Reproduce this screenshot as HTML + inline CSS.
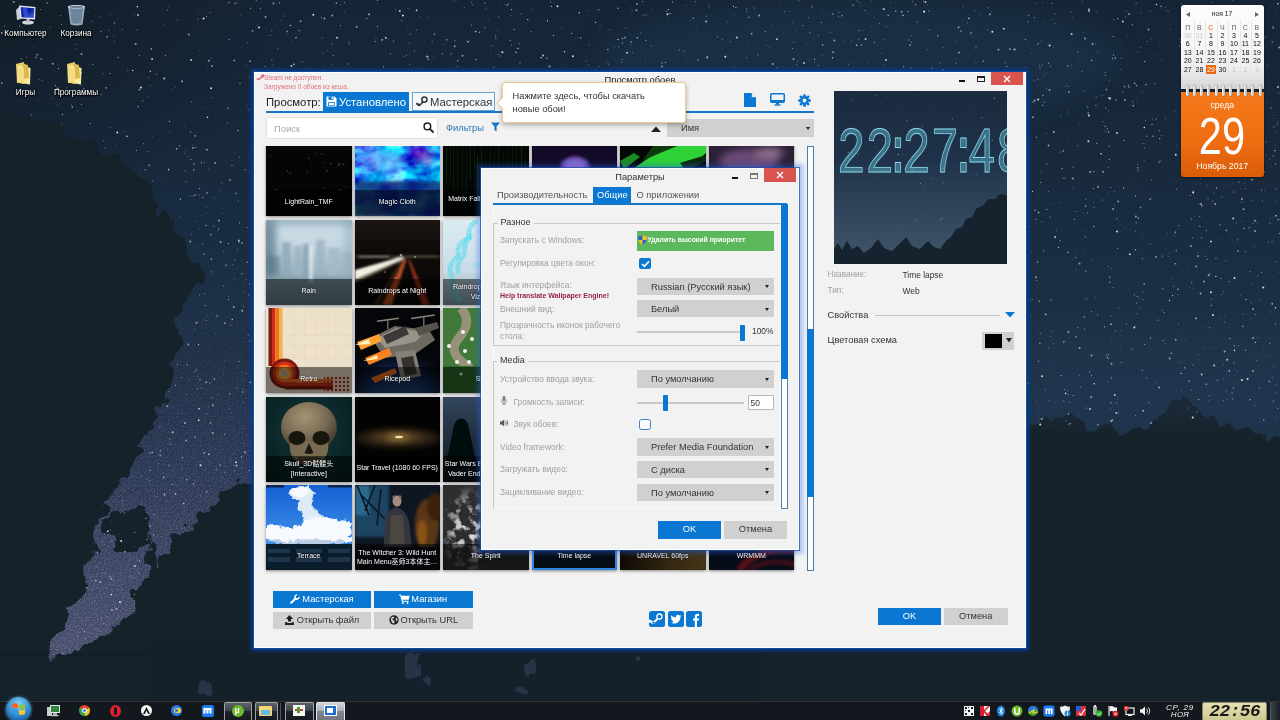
<!DOCTYPE html>
<html lang="ru">
<head>
<meta charset="utf-8">
<title>Просмотр обоев</title>
<style>
*{box-sizing:border-box;margin:0;padding:0}
html,body{width:1280px;height:720px;overflow:hidden;background:#15222d}
body{position:relative;will-change:transform;font-family:"Liberation Sans","Noto Sans CJK SC",sans-serif;font-size:9.3px;color:#333}
.abs{position:absolute}
#bg{position:absolute;left:0;top:0;width:1280px;height:720px}
/* desktop icons */
.dlabel{position:absolute;color:#fff;font-size:8.2px;line-height:11px;text-align:center;white-space:nowrap;text-shadow:0 1px 2px #000,0 0 2px #000,1px 1px 1px #000}
/* main window */
#win{position:absolute;left:254px;top:72px;width:772px;height:576px;background:#f2f2f2;border:1px solid #fbffff;box-shadow:0 0 0 1px #0d4aa0,0 0 4px 3px #0a3c86}
#win *{position:absolute}
.t{white-space:nowrap;line-height:1}
.btn{display:block;text-align:center;white-space:nowrap}
.blue{background:#0a78d2;color:#fff}
.grey{background:#d0d0d0;color:#333}
.thumb{width:85.5px;height:85px;overflow:hidden;background:#000;box-shadow:0 1px 3px rgba(0,0,0,.45)}
.thumb .ov{left:0;right:0;bottom:0;height:26px;background:rgba(0,0,0,.5)}
.thumb .lb{left:-10px;right:-10px;bottom:0;height:27px;line-height:26px;color:#fff;font-size:7px;text-align:center;white-space:nowrap;text-shadow:0 0 1.5px #000}
.thumb .lb2{line-height:9.5px;padding-top:4.5px}
/* dialog */
#dlg{position:absolute;left:481px;top:168px;width:318px;height:382px;background:#f2f2f2;border:1px solid #fbffff;box-shadow:0 0 0 1px rgba(25,75,165,.7),0 0 4px 4px rgba(35,100,235,.33)}
#dlg *{position:absolute}
.lab{color:#a0a0a0;font-size:8.4px;white-space:nowrap;line-height:12px}
.dd{background:#d0d0d0;color:#333;font-size:9.3px;line-height:18.500px;white-space:nowrap}
.dd:after{content:"";position:absolute;right:4.500px;top:7.500px;border:2.700px solid transparent;border-top:3.200px solid #222;border-bottom:0}
/* taskbar */
#tb{position:absolute;left:0;top:701px;width:1280px;height:19px;background:#12181d;border-top:1px solid #2a3238}
#tb *{position:absolute}
</style>
</head>
<body>
<svg id="bg" viewBox="0 0 1280 720">
<defs>
<linearGradient id="sky" x1="0" y1="0" x2="0" y2="1"><stop offset="0" stop-color="#162536"/><stop offset=".3" stop-color="#192b40"/><stop offset=".58" stop-color="#1e334a"/><stop offset="1" stop-color="#223a54"/></linearGradient>
<radialGradient id="glow1" cx=".5" cy=".5" r=".5"><stop offset="0" stop-color="#586582" stop-opacity=".9"/><stop offset="1" stop-color="#2a3e5c" stop-opacity="0"/></radialGradient>
<filter id="b6" x="-30%" y="-30%" width="160%" height="160%"><feGaussianBlur stdDeviation="6"/></filter>
<filter id="b2" x="-10%" y="-10%" width="120%" height="120%"><feGaussianBlur stdDeviation="2"/></filter>
<filter id="rough" x="-10%" y="-10%" width="120%" height="120%"><feTurbulence type="fractalNoise" baseFrequency=".045" numOctaves="3" seed="5" result="n"/><feDisplacementMap in="SourceGraphic" in2="n" scale="34" xChannelSelector="R" yChannelSelector="G"/><feGaussianBlur stdDeviation=".7"/></filter><filter id="rough2" x="-10%" y="-10%" width="120%" height="120%"><feTurbulence type="fractalNoise" baseFrequency=".06 .04" numOctaves="3" seed="9" result="n"/><feDisplacementMap in="SourceGraphic" in2="n" scale="22" xChannelSelector="R" yChannelSelector="G"/><feGaussianBlur stdDeviation=".7"/></filter><filter id="b12" x="-50%" y="-50%" width="200%" height="200%"><feGaussianBlur stdDeviation="14"/></filter>
</defs>
<rect width="1280" height="720" fill="url(#sky)"/>
<radialGradient id="tl" cx="0" cy="0" r="1" gradientUnits="userSpaceOnUse" gradientTransform="scale(300 210)"><stop offset="0" stop-color="#111c26" stop-opacity=".9"/><stop offset=".5" stop-color="#121e29" stop-opacity=".55"/><stop offset="1" stop-color="#121e29" stop-opacity="0"/></radialGradient>
<rect width="320" height="230" fill="url(#tl)"/>
<ellipse cx="860" cy="60" rx="260" ry="60" fill="#1f3a56" opacity=".4" filter="url(#b12)"/>
<linearGradient id="band" x1="0" y1="230" x2="0" y2="660" gradientUnits="userSpaceOnUse"><stop offset="0" stop-color="#1b2d43" stop-opacity="0"/><stop offset=".3" stop-color="#1f3048"/><stop offset=".55" stop-color="#2b3853"/><stop offset=".8" stop-color="#3d4662"/><stop offset="1" stop-color="#4a4f6c"/></linearGradient>
<polygon points="262,225 150,225 100,420 30,670 120,670 262,500" fill="url(#band)"/>
<filter id="grain" x="0" y="0" width="100%" height="100%" color-interpolation-filters="sRGB"><feTurbulence type="fractalNoise" baseFrequency=".75" numOctaves="2" seed="2"/><feColorMatrix type="matrix" values="0 0 0 0 .62  0 0 0 0 .66  0 0 0 0 .8  2.400 0 0 0 -1.150"/></filter>
<linearGradient id="gm" x1="0" y1="230" x2="0" y2="660" gradientUnits="userSpaceOnUse"><stop offset="0" stop-color="#fff" stop-opacity="0"/><stop offset=".35" stop-color="#fff" stop-opacity=".2"/><stop offset=".7" stop-color="#fff" stop-opacity=".5"/><stop offset="1" stop-color="#fff" stop-opacity=".6"/></linearGradient><mask id="gmm"><polygon points="262,225 150,225 100,420 30,670 120,670 262,500" fill="url(#gm)"/></mask>
<rect x="20" y="225" width="245" height="450" filter="url(#grain)" mask="url(#gmm)"/>
<polygon points="-10,104 30,118 57,130 81,141 110,155 134,171 152,196 171,228 188,248 203,262 192,285 185,305 178,340 170,372 162,400 150,430 128,470 104,520 84,575 66,625 44,662 -10,700" fill="#14212b" filter="url(#rough)"/>
<polygon points="262,474 240,484 222,495 196,515 170,545 150,578 125,612 100,636 72,652 44,662 20,680 20,730 262,730" fill="#14212b" filter="url(#rough)"/>
<ellipse cx="128" cy="528" rx="22" ry="20" fill="#14212b" filter="url(#rough)"/>
<ellipse cx="150" cy="560" rx="6" ry="22" fill="#14212b" filter="url(#rough)"/>
<rect x="-20" y="662" width="1320" height="80" fill="#14202a" filter="url(#b6)"/>
<rect x="150" y="640" width="1150" height="90" fill="#14212b"/>
<ellipse cx="413" cy="665" rx="6" ry="14" fill="#343f58" opacity=".6" filter="url(#rough2)"/>
<ellipse cx="425" cy="680" rx="5" ry="6" fill="#343f58" opacity=".6" filter="url(#rough2)"/>
<ellipse cx="530" cy="668" rx="5" ry="7" fill="#343f58" opacity=".6" filter="url(#rough2)"/>
<ellipse cx="520" cy="690" rx="6" ry="4" fill="#343f58" opacity=".6" filter="url(#rough2)"/>
<ellipse cx="205" cy="690" rx="6" ry="8" fill="#343f58" opacity=".6" filter="url(#rough2)"/>
<ellipse cx="640" cy="660" rx="4" ry="3" fill="#343f58" opacity=".6" filter="url(#rough2)"/>
<polygon points="1010,428 1040,424 1065,418 1090,426 1120,432 1145,430 1165,412 1185,396 1200,410 1222,424 1250,432 1290,448 1290,730 760,730 760,440" fill="#15222c" filter="url(#rough2)"/>
<rect x="1020" y="330" width="270" height="95" fill="#25405a" opacity=".25" filter="url(#b12)"/>
<g fill="none" stroke="#dde6f2" stroke-linecap="round"><path stroke-width="0.70" opacity="0.3" d="M1209.2 341.4h0M54.0 70.4h0M163.8 181.3h0M186.7 204.0h0M1026.9 363.1h0M784.0 32.8h0M39.5 99.6h0M231.1 259.5h0M19.9 3.4h0M1169.3 37.9h0M1185.2 277.3h0M1064.2 172.4h0M517.6 34.0h0M1266.6 164.3h0M1156.5 77.6h0M849.2 62.5h0M144.6 116.2h0M306.7 68.4h0M253.7 158.1h0M1159.4 275.5h0M1224.1 185.4h0M1263.6 13.9h0M185.4 502.2h0M625.2 1.2h0M205.1 496.8h0M569.4 18.4h0M1237.0 291.7h0M1114.6 15.9h0M364.7 28.5h0M1249.7 32.6h0M272.0 1.5h0M196.3 396.5h0M1273.9 366.2h0M272.6 42.1h0M1187.6 267.2h0M1243.9 125.6h0M194.6 500.2h0M230.2 149.3h0M1152.3 294.7h0M1264.5 286.7h0M1265.8 154.9h0M930.1 47.0h0M599.4 30.2h0M725.8 55.3h0M1207.0 326.5h0M34.1 67.6h0M1235.0 375.0h0M1098.0 7.4h0M1211.0 268.9h0M1227.3 148.8h0M1216.9 392.1h0M1049.7 58.6h0M1156.2 203.0h0M777.8 56.8h0M1274.5 127.0h0M569.2 71.1h0M1199.9 372.1h0M1226.6 143.4h0M1165.4 11.0h0M249.7 351.3h0M573.4 3.3h0M812.3 28.8h0M146.2 562.4h0M1255.5 292.5h0M1052.5 229.2h0M1191.2 345.4h0M1130.0 105.6h0M914.5 11.1h0M702.9 12.8h0M1168.3 176.7h0M179.6 488.3h0M467.2 36.9h0M245.7 205.5h0M1211.9 164.5h0M1222.4 265.9h0M100.6 71.1h0M119.0 534.0h0M221.1 397.9h0M1120.1 0.8h0M973.5 36.5h0M956.5 59.8h0M1199.3 328.2h0M1212.8 399.3h0M1186.7 271.7h0M1193.3 263.9h0M1129.3 156.0h0M95.2 612.5h0M275.5 26.7h0M1253.5 359.5h0"/><path stroke-width="0.70" opacity="0.45" d="M89.4 65.3h0M1060.9 116.2h0M175.5 87.6h0M1244.5 178.9h0M108.8 559.3h0M1264.4 190.7h0M1037.5 288.2h0M33.1 47.8h0M1060.4 114.2h0M1273.5 118.5h0M810.4 10.8h0M210.7 431.7h0M112.3 580.7h0M1264.0 212.8h0M1083.8 253.5h0M1120.1 421.3h0M201.6 215.7h0M1107.5 381.9h0M245.3 342.1h0M1068.7 112.8h0M223.4 372.5h0M1046.4 73.2h0M264.8 72.6h0M582.5 73.5h0M844.4 40.6h0M81.9 85.2h0M215.6 333.6h0M202.5 107.5h0M130.7 141.9h0M1219.6 136.1h0M1049.5 217.4h0M1110.7 408.5h0M90.0 625.0h0M1220.7 318.3h0M1193.0 145.3h0M1060.2 240.8h0M1220.8 96.3h0M1274.2 115.4h0M575.1 38.1h0M631.7 44.9h0M962.8 5.1h0M1079.7 123.2h0M179.4 216.5h0M1270.4 218.7h0M1053.4 366.2h0M1124.3 228.4h0M607.3 71.3h0M1111.7 340.9h0M600.3 25.9h0M141.5 504.0h0M1114.7 205.2h0M1238.8 7.7h0M1254.8 247.0h0M1270.6 6.0h0M27.2 98.6h0M1067.5 138.3h0M806.9 43.7h0M147.1 512.7h0M912.1 2.7h0M286.8 34.6h0M1067.5 110.9h0M1273.3 366.0h0M201.9 328.0h0M1267.2 102.8h0M1176.6 145.8h0M769.3 47.4h0M1221.2 22.5h0M1240.5 295.5h0M377.1 3.0h0M734.0 15.3h0M94.9 82.4h0M466.4 40.7h0M218.8 132.2h0M1221.0 238.4h0M1273.4 216.9h0M1181.1 68.2h0M1174.2 236.2h0M667.1 19.0h0M980.6 15.1h0M1083.8 32.3h0M560.4 64.1h0M1055.9 401.8h0M883.4 64.7h0M1185.0 153.4h0M1050.8 19.3h0M686.6 61.0h0M1046.6 133.5h0M1108.0 193.4h0M203.5 319.9h0M1154.4 54.8h0"/><path stroke-width="0.70" opacity="0.6" d="M344.2 12.1h0M107.2 616.5h0M1093.4 202.1h0M246.3 65.3h0M1184.2 163.3h0M1117.4 399.7h0M162.4 427.7h0M539.6 72.4h0M1233.2 182.9h0M1269.4 159.6h0M771.6 26.1h0M1165.5 7.7h0M233.5 453.7h0M1060.8 202.4h0M1052.0 331.4h0M742.5 72.5h0M1213.7 347.4h0M100.7 16.8h0M1221.8 294.5h0M1178.5 324.0h0M1135.3 231.8h0M599.4 66.5h0M490.8 50.1h0M859.5 2.6h0M176.1 485.3h0M707.9 4.0h0M1274.6 150.5h0M1036.4 401.8h0M196.9 221.2h0M1244.0 65.0h0M1171.2 278.9h0M294.7 71.1h0M1071.7 65.7h0M220.2 190.2h0M327.3 51.0h0M1050.5 336.4h0M975.9 62.8h0M1198.3 354.3h0M1089.6 372.4h0M427.5 17.4h0M454.8 0.3h0M1275.5 201.8h0M1179.7 362.4h0M96.1 567.4h0M1141.7 233.7h0M1151.0 39.1h0M223.4 251.2h0M1203.2 7.4h0M1075.3 251.1h0M1169.5 253.0h0M882.0 53.5h0M1032.0 323.5h0M792.3 22.1h0M150.4 85.7h0M1050.2 217.0h0M1053.8 47.2h0M124.6 508.4h0M1196.0 413.2h0M874.3 17.7h0M1252.8 283.9h0M148.3 96.9h0M199.1 229.0h0M1208.9 400.3h0M1135.9 183.8h0M230.3 459.4h0M222.4 213.4h0M1231.2 67.8h0M332.1 64.6h0M172.0 470.6h0M870.9 0.8h0M1111.4 268.5h0M1275.5 132.1h0M172.9 89.4h0M1181.3 3.5h0M505.0 4.5h0M1237.2 210.0h0M1139.7 298.0h0M1252.9 223.2h0M1017.2 69.9h0"/><path stroke-width="0.70" opacity="0.8" d="M108.9 30.1h0M1143.9 143.5h0M197.6 376.1h0M204.7 293.6h0M1161.7 135.5h0M651.0 45.9h0M234.3 471.2h0M77.5 636.0h0M1257.3 222.8h0M1106.6 355.0h0M70.0 641.2h0M1254.7 405.8h0M464.1 7.6h0M1273.5 126.9h0M848.3 64.8h0M154.5 491.7h0M244.1 443.3h0M910.7 67.5h0M1068.3 394.5h0M912.9 1.3h0M609.8 29.9h0M1188.3 408.0h0M67.1 88.0h0M796.8 64.5h0M221.8 182.9h0M1118.7 307.5h0M166.9 501.1h0M224.2 360.2h0M830.2 32.6h0M326.1 70.6h0M1141.0 13.0h0M147.9 151.5h0M618.4 47.0h0M208.2 406.8h0M1144.7 147.9h0M4.6 26.0h0M1257.6 337.8h0M1227.5 399.8h0M578.0 37.7h0M1045.6 389.7h0M184.9 170.8h0M1268.3 241.9h0M152.5 181.0h0M1039.5 65.4h0M1218.8 124.8h0M1272.2 377.3h0M243.4 306.0h0M508.2 3.6h0M191.8 234.5h0M586.2 61.3h0M1238.6 345.6h0M1178.0 294.4h0M194.6 329.3h0M239.6 157.2h0M403.8 56.6h0M75.8 48.8h0M1026.4 202.3h0M927.1 49.8h0"/><path stroke-width="0.70" opacity="0.95" d="M124.7 512.7h0M625.9 28.2h0M167.7 10.3h0M191.7 101.9h0M1273.0 26.6h0M1069.9 402.1h0M1180.1 39.1h0M1192.3 237.9h0M1173.8 286.2h0M588.7 64.8h0M818.3 35.3h0M207.2 414.1h0M1221.8 197.1h0M92.3 21.4h0M500.6 56.1h0M1257.9 275.8h0M1198.8 399.4h0M1118.7 412.8h0M210.0 12.6h0M1264.4 172.0h0M190.3 196.4h0M1105.0 72.3h0M1191.2 390.1h0M1261.6 272.6h0M1224.6 59.4h0M1044.4 102.4h0M857.1 1.1h0M238.1 201.2h0M1200.8 178.6h0M75.7 44.4h0M40.7 9.6h0M452.4 70.3h0M141.6 475.9h0M1116.7 403.0h0M709.1 6.3h0M929.7 30.0h0M156.5 74.3h0M1222.0 159.4h0M1108.6 354.7h0M1179.5 45.9h0M1042.1 65.0h0M1036.8 280.4h0M550.5 1.9h0M1277.8 408.5h0M1082.1 71.3h0M1030.0 226.9h0M440.8 74.0h0M236.9 387.9h0M1245.5 251.4h0M471.7 2.3h0M643.1 15.4h0M1197.1 411.8h0M302.3 61.8h0M227.3 122.8h0M746.4 9.0h0M1211.4 126.8h0M101.2 94.5h0M988.4 7.8h0M1091.5 311.5h0M323.8 70.1h0M1122.9 91.9h0M377.6 0.5h0M1050.5 66.6h0M632.1 10.8h0M1223.2 400.8h0M923.5 1.3h0M136.9 29.9h0M1083.9 91.1h0M139.6 55.5h0"/><path stroke-width="0.90" opacity="0.3" d="M1262.8 140.3h0M1229.8 81.3h0M795.8 31.1h0M1245.0 393.9h0M53.3 16.2h0M1260.5 107.6h0M1121.5 283.7h0M1028.3 44.6h0M1207.4 17.5h0M152.6 136.5h0M251.0 340.5h0M1244.0 212.8h0M1201.0 166.7h0M976.2 73.0h0M1227.9 185.2h0M1038.8 419.7h0M1120.4 348.8h0M222.0 258.0h0M1188.0 91.9h0M1161.0 270.4h0M1145.6 421.4h0M500.4 6.5h0M1190.4 119.5h0M867.4 63.2h0M1182.5 413.6h0M1182.8 331.9h0M424.8 41.1h0M902.4 3.1h0M58.1 88.1h0M180.9 348.2h0M207.1 315.2h0M1189.8 287.4h0M1121.7 42.9h0M769.0 72.0h0M1118.9 79.8h0M1083.7 213.0h0M1082.0 115.9h0M1192.3 37.9h0M1276.2 10.2h0M1078.0 63.5h0M657.6 61.8h0M746.5 67.7h0M196.8 147.3h0M853.0 68.0h0M936.5 73.9h0M516.9 1.6h0M1275.0 155.8h0M808.1 59.6h0M1255.3 90.7h0M988.9 62.1h0M1089.3 120.3h0M407.7 26.9h0M1053.3 424.7h0M1161.4 9.3h0M1159.4 44.9h0M1127.6 36.0h0M1193.6 288.2h0M755.8 13.2h0M1050.1 155.7h0M927.4 5.0h0M156.2 496.5h0M138.6 173.1h0M252.2 469.1h0M1209.1 331.3h0M1064.7 86.6h0M1082.4 321.8h0M123.2 503.5h0M1043.4 22.3h0M1242.2 388.6h0M1224.6 316.2h0M1251.8 318.3h0M860.6 6.4h0M1136.8 98.2h0"/><path stroke-width="0.90" opacity="0.45" d="M1225.9 108.7h0M249.8 172.4h0M208.4 480.8h0M1240.6 188.6h0M1242.0 221.6h0M814.6 62.1h0M320.0 73.1h0M237.6 325.4h0M1079.5 375.6h0M254.1 433.3h0M114.8 28.8h0M80.3 6.3h0M167.6 449.7h0M1175.9 251.6h0M1041.1 171.8h0M963.6 6.8h0M1167.2 233.6h0M193.6 247.9h0M1223.4 364.9h0M1031.3 251.8h0M1234.8 382.1h0M766.8 45.2h0M890.7 2.8h0M1026.6 67.8h0M114.1 35.3h0M1073.1 187.4h0M231.3 412.6h0M244.8 291.2h0M1140.1 307.6h0M125.9 509.9h0M190.6 131.7h0M1207.4 185.2h0M430.8 73.8h0M1142.5 91.9h0M645.4 62.0h0M1163.4 288.9h0M778.7 71.0h0M52.6 98.4h0M811.9 5.7h0M1269.9 355.4h0M1072.9 17.7h0M257.3 25.2h0M217.5 231.1h0M1030.3 315.7h0M690.3 20.1h0M757.5 56.0h0M705.8 58.4h0M1275.2 418.1h0M789.8 11.5h0M1132.9 100.9h0M281.0 20.4h0M189.2 379.7h0M1030.5 299.8h0M562.1 28.6h0M112.5 590.8h0M130.6 474.4h0M1214.0 138.4h0M209.0 460.8h0M1276.1 384.6h0M1181.6 390.8h0M1265.2 36.4h0M1120.6 330.7h0M588.7 10.3h0M341.3 70.9h0M375.9 38.7h0M206.8 207.1h0M1187.3 156.8h0M471.4 24.1h0M193.0 145.2h0M57.2 104.8h0M246.0 390.8h0M124.1 131.6h0M228.3 296.6h0M1244.6 183.5h0M77.3 110.9h0M1095.3 43.2h0M185.2 149.9h0M164.6 25.0h0M1135.1 84.0h0M685.9 5.6h0M443.4 44.2h0M124.2 490.6h0M734.9 67.2h0M169.9 132.8h0M234.3 278.8h0M1066.5 85.1h0M956.9 41.7h0M696.2 27.0h0"/><path stroke-width="0.90" opacity="0.6" d="M822.7 55.8h0M1077.4 146.0h0M42.1 80.6h0M127.8 70.5h0M184.9 153.6h0M71.4 104.3h0M1222.9 14.0h0M1132.4 102.2h0M177.5 19.9h0M746.7 57.6h0M1105.1 131.3h0M1046.7 88.6h0M730.3 41.6h0M722.4 39.6h0M248.8 109.6h0M1225.9 260.9h0M967.4 22.9h0M50.4 27.0h0M858.7 39.5h0M247.2 42.8h0M252.7 257.7h0M1152.2 119.2h0M1160.2 160.7h0M1214.0 193.1h0M241.2 14.7h0M252.8 124.6h0M614.3 47.0h0M199.7 295.3h0M1035.4 3.4h0M632.4 52.8h0M1095.9 297.8h0M1251.6 200.3h0M1067.8 390.6h0M1108.6 266.3h0M93.0 589.5h0M472.6 5.0h0M419.9 17.2h0M229.3 408.9h0M1188.4 46.2h0M1201.5 121.9h0M640.8 32.9h0M1256.7 360.3h0M1031.9 53.2h0M1143.1 299.4h0M1264.0 346.2h0M1137.9 51.7h0M1226.5 390.9h0M1034.2 80.3h0M143.5 143.6h0M170.2 439.2h0M838.9 12.3h0M92.4 602.0h0M340.5 4.9h0M91.2 580.4h0M1060.0 240.4h0M46.9 2.8h0M408.2 8.3h0M200.3 495.1h0M237.3 249.4h0M621.7 62.6h0M349.0 41.8h0M215.8 320.0h0M218.1 394.8h0M1279.1 93.1h0M1087.1 298.8h0M1192.5 138.7h0M1055.2 13.9h0M208.8 169.4h0M214.1 197.9h0M1259.7 300.1h0M1098.0 52.4h0M1277.5 122.8h0M1242.9 56.6h0M911.4 35.9h0"/><path stroke-width="0.90" opacity="0.8" d="M1159.6 130.7h0M47.4 3.2h0M818.2 65.6h0M1275.7 261.9h0M245.7 279.9h0M122.5 500.5h0M1084.4 328.9h0M1189.7 49.6h0M1117.4 248.3h0M1065.8 421.0h0M230.7 325.0h0M646.1 15.0h0M1272.7 156.0h0M1103.0 121.7h0M1176.7 189.3h0M917.3 22.0h0M879.3 23.2h0M340.5 25.7h0M717.3 36.9h0M247.2 227.4h0M401.7 20.6h0M139.0 572.9h0M206.6 16.3h0M666.5 11.3h0M940.1 62.9h0M1071.1 12.0h0M1063.5 342.7h0M270.2 35.4h0M199.3 409.0h0M1132.0 349.3h0M1270.1 223.3h0M642.4 1.6h0M177.4 364.4h0M1259.6 388.2h0M1034.3 17.7h0M90.3 32.7h0M1251.2 302.8h0M1144.7 344.5h0M1146.4 377.9h0M746.9 11.6h0M758.1 54.8h0M172.0 484.3h0M295.4 37.8h0M170.4 444.0h0M498.8 17.0h0M754.1 8.0h0M798.8 0.2h0M1064.3 389.5h0M792.3 48.5h0M955.9 63.2h0M1262.3 201.0h0M61.6 24.3h0M19.4 26.1h0M409.8 64.3h0M195.3 147.5h0M886.1 26.6h0M865.0 10.6h0M390.6 53.6h0M1005.1 62.9h0M911.6 42.2h0M1113.9 19.6h0M608.4 64.1h0M410.2 34.1h0M211.8 398.2h0M103.8 140.8h0M1116.9 218.7h0M1087.5 212.9h0M1206.5 230.7h0M197.9 19.0h0M1085.8 199.2h0M97.2 628.8h0M1193.5 176.6h0M1105.4 75.1h0M159.8 427.0h0M1279.6 233.5h0M1199.0 203.9h0M223.7 286.0h0M751.5 33.9h0M414.4 51.1h0M1192.0 44.6h0M1040.2 333.4h0M1110.7 187.5h0M204.1 162.4h0M60.7 15.7h0"/><path stroke-width="0.90" opacity="0.95" d="M768.9 73.7h0M1217.3 380.3h0M1162.6 256.1h0M1275.5 324.0h0M1097.6 314.8h0M928.9 11.2h0M777.1 67.7h0M196.3 369.7h0M1136.8 303.0h0M1207.3 259.2h0M672.5 1.9h0M1073.1 167.1h0M239.5 222.8h0M1233.4 192.1h0M193.5 483.5h0M100.9 31.4h0M1156.1 119.1h0M224.6 434.1h0M493.8 67.1h0M332.2 43.9h0M82.4 7.1h0M1026.3 172.8h0M1038.4 361.3h0M265.1 66.5h0M199.7 188.6h0M380.3 72.6h0M1250.1 271.8h0M1105.8 108.0h0M1157.9 320.1h0M103.9 623.4h0M1046.8 209.5h0M165.4 55.4h0M1046.7 164.2h0M211.2 271.9h0M1164.3 312.5h0M55.6 85.5h0M809.8 32.7h0M1137.5 296.4h0M484.7 27.7h0M1190.2 195.5h0M495.7 36.1h0M1198.7 399.6h0M1237.5 239.9h0M1136.1 3.3h0M1180.5 42.0h0M909.0 40.0h0M874.6 42.6h0M239.1 361.6h0M1162.1 288.9h0M1027.8 22.0h0M1091.4 375.7h0M1201.5 237.7h0M1186.3 128.2h0M1142.6 258.7h0M859.1 30.4h0M1168.0 11.2h0M1036.5 137.3h0M803.1 25.5h0M495.9 38.5h0M1240.3 148.0h0M245.2 169.8h0M1261.4 190.1h0M193.9 485.1h0M442.4 53.7h0M1239.0 182.2h0"/><path stroke-width="1.10" opacity="0.3" d="M781.1 1.4h0M456.5 66.4h0M1259.6 421.8h0M1217.7 143.9h0M698.1 35.8h0M143.2 549.9h0M822.4 10.8h0M1053.2 203.4h0M170.7 218.0h0M134.2 14.4h0M10.9 48.7h0M1157.3 307.1h0M1037.8 193.0h0M1230.5 237.2h0M747.1 44.7h0M291.8 41.5h0M1097.8 351.9h0M1184.2 142.7h0M433.7 56.8h0M199.3 50.7h0M485.5 8.0h0M207.8 66.0h0M1040.0 408.1h0M1275.6 145.8h0M1040.9 40.5h0M247.2 105.7h0M1257.6 135.1h0M1082.2 41.7h0M88.1 11.6h0M1070.4 67.5h0M233.5 417.8h0M76.0 630.1h0M1181.4 139.2h0M1068.1 333.5h0M851.7 62.3h0M134.2 546.4h0M975.9 48.5h0M1248.5 228.2h0M1082.6 230.5h0M272.6 64.3h0M1046.8 1.7h0M1037.6 410.8h0M1279.8 272.5h0M388.3 38.9h0M1203.2 347.5h0M652.6 9.2h0M1141.8 143.2h0M1197.9 79.1h0M1184.9 133.8h0M243.7 379.7h0M104.7 574.4h0M549.5 66.2h0M1198.8 57.4h0M991.2 11.9h0M116.5 144.2h0M1168.4 256.1h0M57.6 65.1h0M1199.9 183.7h0M1027.9 243.1h0M181.8 421.1h0M1184.9 339.3h0M1232.6 0.5h0M199.8 10.3h0M1209.7 246.8h0M1043.7 418.2h0M1271.5 166.0h0M531.5 9.1h0M1206.8 383.9h0M861.9 30.8h0M1182.9 271.8h0M1089.1 371.6h0M596.0 69.1h0M991.1 31.7h0M184.8 125.8h0M149.6 164.7h0"/><path stroke-width="1.10" opacity="0.45" d="M103.1 73.6h0M1236.1 222.9h0M322.8 53.6h0M181.4 377.3h0M1242.9 314.1h0M1170.4 29.1h0M1126.5 11.0h0M943.1 47.4h0M797.9 61.5h0M1066.0 56.0h0M1053.5 343.8h0M199.3 195.2h0M1147.1 41.4h0M1165.1 343.2h0M79.5 9.0h0M1156.9 419.2h0M110.1 127.5h0M1102.4 95.2h0M871.8 26.7h0M1197.9 253.1h0M1056.4 230.5h0M101.5 582.8h0M1108.3 110.5h0M168.8 6.5h0M1277.1 125.0h0M784.8 11.4h0M248.2 157.7h0M471.5 25.7h0M1176.5 250.4h0M1165.3 118.6h0M1224.3 9.5h0M395.5 9.8h0M513.6 70.2h0M409.6 43.4h0M1048.6 348.2h0M1144.2 160.3h0M1245.1 188.8h0M1109.4 80.2h0M110.6 14.0h0M186.5 394.6h0M1174.7 233.3h0M510.9 15.2h0M149.3 480.4h0M1223.4 378.8h0M1092.5 260.6h0M589.3 45.0h0M1072.2 259.2h0M237.1 2.7h0M61.5 37.5h0M1258.4 108.4h0M851.4 41.1h0M1237.6 371.0h0M251.1 244.7h0M61.9 124.0h0M1199.4 143.7h0M1155.8 382.2h0M974.7 10.8h0M186.3 181.6h0M211.1 58.3h0M1043.8 75.3h0M202.6 244.4h0M1237.1 5.6h0M201.3 388.3h0M884.5 39.2h0M232.7 264.7h0M1024.3 144.4h0M26.3 57.4h0M188.5 155.7h0M1137.8 164.2h0M1037.8 79.4h0M1041.8 221.9h0M147.2 479.5h0M248.0 454.6h0M1253.5 167.4h0M606.8 62.2h0M1223.4 291.8h0M158.9 454.7h0M1194.8 173.0h0M727.7 21.7h0M1275.3 392.8h0M1193.1 54.9h0M1248.1 137.9h0"/><path stroke-width="1.10" opacity="0.6" d="M1224.3 322.0h0M344.4 2.6h0M250.5 8.4h0M248.2 334.9h0M1150.1 244.1h0M1076.3 211.5h0M322.0 38.0h0M118.0 580.2h0M224.7 472.3h0M206.5 320.5h0M492.1 45.7h0M519.6 43.5h0M1053.4 132.6h0M1209.6 327.3h0M987.3 29.8h0M622.1 59.6h0M683.8 51.1h0M136.4 150.4h0M93.0 64.4h0M1048.2 191.5h0M1135.4 415.2h0M1190.1 145.2h0M1121.4 58.0h0M1256.5 101.0h0M1272.1 241.2h0M765.2 31.4h0M1039.9 67.9h0M1085.3 236.9h0M197.6 388.6h0M1086.5 408.1h0M976.0 46.9h0M243.8 402.3h0M1273.4 400.9h0M1109.2 146.4h0M1096.1 97.1h0M1241.8 202.5h0M100.4 631.3h0M808.4 17.8h0M511.5 45.0h0M1094.0 207.6h0M1032.2 299.2h0M1082.2 1.2h0M249.8 76.8h0M406.4 55.2h0M110.3 530.0h0M416.8 30.1h0M148.9 77.3h0M1107.4 128.9h0M1211.5 299.2h0M277.9 48.7h0M1162.1 310.2h0M1208.0 198.7h0M31.2 115.1h0M246.1 373.3h0M271.8 30.6h0M1174.4 110.8h0M1193.1 364.9h0M531.1 31.6h0M1073.0 395.4h0M521.0 14.1h0M158.7 463.5h0M1142.9 291.8h0M1265.1 37.7h0M243.4 389.2h0M234.9 260.2h0M211.8 97.7h0M1145.5 120.3h0M85.0 638.5h0M1060.7 152.0h0M1102.5 200.0h0M793.9 42.5h0M122.2 29.2h0M333.4 55.5h0M1255.9 123.8h0M1115.4 330.8h0M1108.5 167.3h0M321.5 17.6h0M1113.3 287.6h0M1266.0 142.1h0M1253.0 168.4h0M1080.6 387.0h0M1199.8 216.4h0"/><path stroke-width="1.10" opacity="0.8" d="M109.9 73.6h0M1221.0 278.3h0M260.4 8.2h0M1220.1 224.9h0M81.5 104.2h0M112.0 541.0h0M455.0 40.8h0M154.6 514.5h0M1233.4 121.0h0M1076.0 257.6h0M1100.6 153.5h0M195.9 194.7h0M134.7 532.3h0M1025.4 39.5h0M134.2 594.3h0M271.9 59.8h0M201.4 162.9h0M1040.7 182.3h0M1245.4 350.1h0M1215.1 104.6h0M1200.6 83.7h0M349.2 43.8h0M253.1 382.7h0M1064.0 178.4h0M58.4 68.4h0M1191.8 282.6h0M551.6 6.4h0M1197.4 13.4h0M1138.2 170.2h0M817.6 72.1h0M1087.8 107.1h0M1136.2 222.7h0M90.3 123.6h0M1159.1 161.9h0M1191.2 37.1h0M706.8 16.0h0M228.4 243.6h0M1193.2 191.1h0M232.0 165.2h0M205.3 305.5h0M1190.0 73.2h0M1249.6 227.2h0M142.7 100.7h0M1077.9 327.7h0M109.1 534.2h0M1149.8 199.6h0M1233.4 388.1h0M1191.7 219.0h0M254.3 431.0h0M1272.2 41.9h0M1108.3 358.3h0M366.8 18.4h0M375.1 41.6h0M1126.3 324.0h0M84.5 631.6h0M118.2 57.2h0M160.3 455.4h0M1232.6 398.8h0M1036.0 219.5h0M377.5 26.6h0M240.0 83.4h0M1093.4 188.6h0M62.4 114.4h0M1043.4 250.7h0M1254.0 6.8h0M1207.5 114.9h0M229.0 39.6h0M733.5 6.4h0M1246.1 299.4h0M1111.7 377.9h0M249.8 341.0h0M510.1 40.6h0M195.0 371.3h0"/><path stroke-width="1.10" opacity="0.95" d="M1104.4 326.7h0M507.3 4.9h0M814.6 59.2h0M1234.3 345.7h0M1233.9 362.7h0M217.0 315.9h0M1116.1 99.9h0M622.5 43.0h0M1132.3 24.7h0M179.6 145.8h0M1270.9 107.7h0M218.5 229.0h0M83.8 88.8h0M903.5 66.7h0M1211.3 305.3h0M873.1 73.6h0M484.9 3.0h0M1038.3 43.2h0M1070.3 423.6h0M1199.9 226.3h0M1150.9 198.6h0M1117.8 18.5h0M1163.2 340.8h0M514.1 29.2h0M1006.9 66.5h0M520.0 62.7h0M1074.3 219.2h0M149.9 453.1h0M735.9 7.5h0M1150.6 338.1h0M1129.0 87.3h0M21.3 58.8h0M1051.1 300.1h0M1105.0 126.3h0M1172.6 295.6h0M150.1 470.2h0M206.1 225.4h0M1229.8 338.5h0M249.6 284.0h0M381.9 40.0h0M1194.6 134.5h0M1248.5 71.7h0M1175.5 232.1h0M1242.8 326.4h0M1032.6 191.4h0M645.9 40.3h0M1240.5 32.3h0M1062.1 168.5h0M662.0 62.9h0M648.6 70.7h0M1033.1 102.1h0M1244.1 228.4h0M175.5 385.2h0M62.4 653.7h0M145.3 169.7h0M80.3 35.5h0M1094.0 171.2h0M622.6 38.6h0M1123.9 140.3h0M194.0 163.9h0M749.0 17.4h0M79.6 75.3h0M1229.0 18.3h0M1109.3 159.3h0M146.0 518.4h0M383.5 66.8h0M254.6 263.1h0M1085.7 271.0h0M1263.8 419.9h0M1128.7 85.8h0M1216.4 187.9h0M1223.1 125.5h0M248.8 294.7h0M1209.6 274.0h0M1093.8 226.4h0M202.8 197.7h0M451.2 54.0h0M1048.6 63.0h0M296.2 37.5h0M571.8 33.2h0"/><path stroke-width="1.30" opacity="0.3" d="M114.5 41.4h0M1140.8 47.5h0M418.1 68.5h0M1075.9 270.0h0M117.1 613.3h0M432.4 41.4h0M190.6 132.4h0M1120.8 69.4h0M135.4 566.6h0M911.4 68.3h0M1270.3 312.1h0M1097.1 12.1h0M1135.9 230.9h0M486.3 9.1h0M1211.5 2.4h0M1120.2 231.9h0M1042.9 3.1h0M40.5 38.6h0M205.2 213.4h0M1037.3 45.0h0M111.9 521.8h0M1279.4 219.1h0M39.0 79.5h0M1085.3 299.0h0M1161.9 59.3h0M1125.4 16.7h0M1267.3 65.9h0M498.1 30.1h0M1258.4 69.4h0M283.9 15.9h0M524.9 40.0h0M1205.5 256.5h0M1049.4 400.7h0M488.2 19.1h0"/><path stroke-width="1.30" opacity="0.45" d="M1068.4 86.3h0M102.4 541.5h0M804.2 70.5h0M1114.5 191.8h0M679.4 49.9h0M1255.1 314.5h0M256.2 0.7h0M209.9 382.9h0M1149.0 402.7h0M1209.4 395.6h0M169.0 391.6h0M1110.6 316.3h0M1155.0 83.5h0M1229.0 281.5h0M105.1 148.3h0M1178.8 225.7h0M101.4 618.6h0M695.5 1.7h0M213.8 226.1h0M1054.8 23.6h0M1151.5 179.9h0M1051.9 3.4h0M838.5 16.7h0M1063.8 400.9h0M228.6 299.5h0M1269.6 343.5h0M821.5 22.5h0M1212.7 201.2h0M1137.4 313.6h0M498.3 54.4h0M1276.0 188.9h0M1150.2 11.3h0M1249.5 146.1h0M812.2 7.0h0"/><path stroke-width="1.30" opacity="0.6" d="M1113.6 55.0h0M665.6 62.4h0M1113.2 36.4h0M1275.5 163.9h0M242.0 274.0h0M1142.3 370.4h0M1068.6 424.1h0M190.9 159.3h0M131.0 576.2h0M147.0 539.5h0M1121.5 362.6h0M688.9 72.6h0M1216.0 258.3h0M1026.7 327.3h0M1028.7 15.3h0M1078.0 52.1h0M168.8 465.2h0M1096.8 143.5h0M348.3 64.0h0M1112.6 58.5h0M1146.7 136.2h0M114.4 23.0h0M908.0 11.5h0M1134.4 294.8h0M1202.6 108.9h0M393.5 41.2h0M1064.1 341.5h0M1095.9 105.3h0M1232.1 392.8h0"/><path stroke-width="1.30" opacity="0.8" d="M136.0 589.6h0M915.7 4.6h0M1061.1 375.6h0M511.6 9.6h0M1042.7 105.3h0M203.8 254.1h0M698.1 59.8h0M1136.7 85.7h0M1226.1 149.1h0M598.8 9.8h0M580.8 37.9h0M961.0 31.2h0M200.0 379.8h0M1058.5 247.4h0M1091.7 60.4h0M187.3 364.8h0M1109.7 282.2h0M1251.4 130.6h0M180.4 199.2h0M241.5 456.9h0M1204.4 17.2h0M822.7 45.0h0M279.3 2.8h0M1250.0 399.7h0M595.5 22.4h0M198.6 344.7h0M1138.4 218.0h0M1144.8 61.6h0M1135.1 326.8h0M229.7 393.6h0M1193.5 170.4h0M1123.6 187.9h0M216.2 469.8h0M924.1 12.0h0"/><path stroke-width="1.30" opacity="0.95" d="M336.3 2.9h0M547.5 20.9h0M518.0 48.4h0M1255.4 342.3h0M1253.8 48.6h0M1169.5 300.4h0M618.0 39.4h0M1177.9 289.2h0M1184.8 367.8h0M478.2 71.1h0M970.9 33.0h0M139.6 561.1h0M214.4 378.9h0M204.3 453.0h0M232.2 319.4h0M527.8 19.6h0M1161.1 6.3h0M72.3 106.9h0M1195.9 169.4h0M1085.6 206.1h0M220.0 465.1h0M1063.2 150.9h0M1273.2 27.9h0M1068.4 414.1h0M226.0 265.2h0M1137.7 167.8h0M475.9 59.6h0M1181.2 373.4h0M1133.2 105.7h0M1153.1 136.1h0M149.1 165.3h0M1215.9 276.4h0M1250.4 121.9h0M66.2 31.4h0"/><path stroke-width="1.60" opacity="0.6" d="M1135.4 249.8h0M670.1 13.5h0M553.5 35.5h0M247.1 262.3h0M1042.9 95.5h0M193.7 170.0h0M228.8 2.5h0M631.1 42.1h0M1076.2 336.9h0M883.4 8.9h0M888.2 15.3h0M206.8 491.6h0M1124.6 86.7h0M1067.7 65.8h0M1144.2 283.9h0M194.9 437.1h0M255.9 328.6h0M932.2 68.3h0M151.4 48.9h0M895.7 11.3h0M211.4 259.1h0M1159.7 138.5h0M1035.2 210.2h0M152.2 452.4h0M235.3 3.5h0M842.0 15.8h0M1145.8 84.8h0M1037.6 262.2h0M109.5 576.8h0M287.2 31.6h0M238.0 130.6h0M1067.8 252.4h0M428.0 56.9h0M1204.8 84.5h0M1201.9 205.9h0M1107.1 357.2h0M1134.6 83.2h0M1106.5 89.6h0M1109.7 277.3h0M41.1 59.1h0M668.3 9.5h0M106.0 87.9h0M1108.6 132.0h0M457.7 60.8h0M853.0 5.3h0M1241.2 148.1h0M861.4 45.1h0M186.9 479.6h0M252.5 30.9h0M1242.9 48.4h0M210.6 423.1h0M138.2 106.8h0M1084.4 317.0h0M1039.3 301.2h0M1171.1 353.3h0M607.9 49.6h0M1189.3 381.0h0M1278.1 219.8h0M195.2 135.9h0M153.6 534.8h0M1135.6 195.8h0M299.1 30.5h0M516.1 52.4h0M434.4 34.2h0M1192.5 70.4h0M1140.5 207.5h0M1110.8 402.7h0M617.9 8.3h0M236.1 193.3h0M150.0 526.3h0M382.4 39.8h0M1088.2 113.1h0M228.3 108.2h0M207.1 192.9h0M160.4 450.7h0M1262.8 119.4h0M1152.0 124.5h0M249.4 470.5h0M1018.0 73.0h0M253.1 463.5h0M1097.8 424.7h0M832.5 14.0h0M242.5 392.1h0M1206.3 384.3h0M1039.9 343.2h0M546.8 58.2h0M210.9 234.6h0M983.2 61.3h0M751.9 33.6h0M937.7 35.8h0M1101.4 153.9h0M1275.0 150.7h0M446.8 39.7h0M252.8 418.1h0M1175.3 263.8h0M193.8 195.6h0M1191.9 85.8h0M1226.3 230.4h0M182.4 457.6h0M242.0 242.9h0M693.3 18.0h0M36.1 57.2h0M169.5 121.2h0M1238.1 250.9h0M256.0 386.6h0M479.5 32.3h0M1269.3 381.6h0M428.2 59.3h0"/><path stroke-width="1.60" opacity="0.8" d="M1115.4 58.0h0M107.1 36.7h0M37.2 54.8h0M1068.8 92.0h0M175.6 494.1h0M250.1 61.2h0M1229.3 370.9h0M193.0 147.9h0M475.7 31.6h0M969.0 18.4h0M300.6 21.2h0M1010.0 49.1h0M541.2 57.8h0M637.3 37.8h0M183.7 503.5h0M579.3 12.8h0M132.7 70.5h0M230.0 180.1h0M989.9 14.4h0M224.8 323.3h0M832.5 57.8h0M1233.5 135.4h0M238.7 240.3h0M1045.7 314.4h0M1275.5 307.9h0M150.4 71.3h0M564.6 51.7h0M139.5 89.6h0M625.1 37.6h0M903.0 15.5h0M168.6 169.6h0M1272.2 303.9h0M86.7 587.8h0M1254.3 124.8h0M1.7 83.0h0M1252.3 141.7h0M234.2 60.5h0M95.9 580.6h0M163.6 477.2h0M1155.9 256.9h0M910.0 45.0h0M637.0 3.9h0M290.4 25.5h0M176.6 148.8h0M856.6 45.2h0"/><path stroke-width="1.60" opacity="0.95" d="M206.9 149.7h0M27.9 23.2h0M1234.5 350.4h0M1191.0 246.1h0M207.5 117.3h0M323.8 71.4h0M111.3 594.8h0M124.9 551.8h0M293.9 64.2h0M1094.3 383.7h0M199.0 408.7h0M416.6 10.4h0M1212.4 166.5h0M1156.5 4.5h0M369.1 14.4h0M1111.2 421.0h0M1276.1 215.8h0M212.1 66.0h0M126.9 136.2h0M1252.0 179.8h0M137.3 6.8h0M253.4 119.5h0M1129.0 14.0h0M884.1 9.3h0M1065.6 393.4h0M1144.3 127.5h0"/><path stroke-width="2.00" opacity="0.6" d="M833.2 52.2h0M468.1 41.8h0M116.5 608.7h0M209.0 60.8h0M81.0 73.0h0M1148.5 29.6h0M1253.1 338.0h0M1111.0 324.2h0M1169.7 358.4h0M1204.7 42.7h0M1252.6 11.5h0M57.8 88.6h0M1085.0 38.6h0M1103.2 171.7h0M1150.9 422.9h0M13.7 2.0h0M1243.6 209.3h0M1224.6 351.6h0M1277.9 3.8h0M454.7 46.2h0M1279.2 47.4h0M1257.3 134.0h0M636.4 10.2h0M1215.2 204.1h0M185.0 423.0h0M1033.0 117.2h0M206.2 382.3h0M1200.6 293.4h0M182.1 81.3h0M1198.1 255.9h0M190.2 241.5h0M356.6 26.9h0M1124.9 100.1h0M549.5 66.5h0M265.5 16.9h0M188.8 34.6h0M1038.5 212.5h0M1098.1 187.0h0M1196.1 318.2h0M1079.5 263.5h0M1113.2 209.1h0M1091.5 355.4h0M1175.7 339.7h0M196.5 322.8h0M1201.1 204.0h0M219.0 220.4h0M324.4 18.4h0M17.1 66.9h0M167.3 406.2h0M1049.5 90.0h0M56.6 89.6h0M1241.9 199.1h0M1092.5 44.1h0M164.6 494.7h0M1203.9 281.6h0M239.0 241.6h0M111.9 610.0h0M959.0 52.5h0M99.9 581.9h0M901.6 11.8h0M220.6 241.9h0M273.5 3.5h0M958.5 27.2h0M244.9 452.3h0M665.6 73.2h0M1143.1 410.8h0M81.5 54.1h0M1079.6 348.0h0M462.5 55.7h0M233.7 307.1h0M1111.5 363.7h0M212.9 432.9h0M1254.9 220.7h0M1118.2 201.4h0M1053.8 132.0h0M1196.2 266.5h0M1.8 32.9h0M215.2 163.1h0M111.4 578.7h0M1035.9 277.2h0M772.8 64.1h0M834.3 40.4h0M1255.1 230.9h0M188.4 344.4h0M426.8 56.4h0M1109.0 98.0h0M1159.2 387.5h0M1263.2 107.2h0M759.2 15.6h0M793.5 59.0h0M332.3 15.4h0M943.2 70.1h0M242.3 310.8h0M135.7 44.1h0M97.5 552.4h0M1208.6 275.2h0M1089.1 11.2h0M1034.6 100.6h0M186.1 440.6h0M1068.3 331.7h0M1091.1 397.1h0M52.8 63.8h0M1112.4 420.3h0M1048.6 145.4h0M1135.9 216.5h0M208.9 454.3h0M1041.7 419.0h0M998.5 49.8h0M1028.0 383.5h0M1072.7 178.6h0M236.5 465.5h0M1253.1 371.0h0M212.8 405.3h0M1253.1 308.9h0M549.8 72.1h0M662.0 66.5h0M1090.2 171.9h0"/><path stroke-width="2.00" opacity="0.8" d="M865.5 38.9h0M627.0 52.7h0M337.0 37.8h0M1003.8 28.8h0M1071.6 33.9h0M925.4 2.0h0M164.2 78.4h0M291.4 65.9h0M236.1 462.2h0M1227.2 359.8h0M1122.9 21.4h0M1233.2 218.4h0M1129.9 254.3h0M134.9 566.1h0M1090.0 409.1h0M1214.2 365.4h0M736.9 37.6h0M191.1 60.0h0M1117.0 132.9h0M885.9 60.0h0M706.1 21.4h0M1055.2 236.9h0M543.0 55.5h0M803.9 62.9h0M1114.8 394.9h0M1116.3 412.9h0M1277.9 87.0h0M385.8 37.7h0M399.8 10.9h0M1210.9 241.4h0M707.3 57.3h0M1134.1 327.5h0M152.1 58.9h0M172.6 432.3h0M198.7 420.3h0M107.8 531.3h0M776.9 39.3h0M138.0 14.9h0M1014.6 49.5h0M1088.9 9.5h0M250.3 382.3h0M1201.7 374.4h0"/><path stroke-width="2.00" opacity="0.95" d="M1210.9 292.3h0M1238.6 90.6h0M140.9 87.5h0M992.4 31.8h0M667.5 14.3h0M200.5 465.2h0M121.2 540.9h0M572.9 56.3h0M1192.7 417.6h0M1175.8 154.7h0M1263.2 287.4h0M1117.0 231.4h0M203.6 18.5h0M313.3 14.8h0M1193.2 192.5h0M1247.6 379.0h0M1042.1 376.3h0M1040.2 424.4h0M1208.7 99.1h0M1212.9 315.0h0M725.3 56.8h0M557.5 6.2h0M1038.2 99.6h0M211.0 88.3h0M1089.0 115.4h0M402.9 15.6h0M1049.6 45.5h0M259.0 27.5h0M924.2 11.5h0M1110.1 98.4h0M117.3 132.6h0M1241.9 379.9h0M502.4 52.3h0M1088.4 141.3h0M1234.5 277.9h0M120.0 601.9h0"/></g>
</svg>

<!-- computer -->
<svg class="abs" style="left:14px;top:4px" width="24" height="22" viewBox="0 0 24 22"><defs><linearGradient id="scr" x1="0" y1="0" x2="1" y2="1"><stop offset="0" stop-color="#1636c8"/><stop offset=".5" stop-color="#0a1e9c"/><stop offset="1" stop-color="#4a7ae8"/></linearGradient></defs><polygon points="2,6 6,2 7,15 3,16" fill="#c8ccd4"/><polygon points="5,1.500 21.500,3 21,15.500 6.500,14.500" fill="#e8ecf2"/><polygon points="6.500,3 20.300,4.200 19.900,14 7.600,13.200" fill="url(#scr)"/><polygon points="9,4 13,4.400 15,13.600 10,13.300" fill="#3a5ee0" opacity=".7"/><ellipse cx="14" cy="18.500" rx="6" ry="2" fill="#d4d8de"/><rect x="12.500" y="15" width="3" height="3.500" fill="#b8bcc4"/></svg>
<div class="dlabel" style="left:0;top:28px;width:51px">Компьютер</div>
<!-- bin -->
<svg class="abs" style="left:67px;top:4px" width="19" height="22" viewBox="0 0 19 22"><path d="M1 2.500Q9.500 0 18 2.500L15.500 20.500Q9.500 22.500 3.500 20.500Z" fill="#b9c6d4" opacity=".85"/><path d="M3 4.500Q9.500 3 16 4.500L14.300 19Q9.500 20.500 4.700 19Z" fill="#5f7a96" opacity=".8"/><ellipse cx="9.500" cy="2.800" rx="8.500" ry="1.800" fill="#dfe6ee"/><ellipse cx="9.500" cy="2.900" rx="7" ry="1.100" fill="#6a7c90"/></svg>
<div class="dlabel" style="left:51px;top:28px;width:50px">Корзина</div>
<!-- folders -->
<svg class="abs" style="left:15px;top:62px" width="17" height="23" viewBox="0 0 17 23"><polygon points="1,2 9,0 10,18 2,21" fill="#e8cf6a"/><polygon points="3,3.500 12,5 15.500,6 15,22.500 2,20.500" fill="#f8e9a0"/><polygon points="8,1.500 13,3 14,16 9,17" fill="#d9b74c"/><polygon points="2.500,5 9,7 9.500,22 2,20.500" fill="#f3dc82"/></svg>
<div class="dlabel" style="left:0;top:86.500px;width:51px">Игры</div>
<svg class="abs" style="left:66px;top:62px" width="17" height="23" viewBox="0 0 17 23"><polygon points="1,2 9,0 10,18 2,21" fill="#e8cf6a"/><polygon points="3,3.500 12,5 15.500,6 15,22.500 2,20.500" fill="#f8e9a0"/><polygon points="8,1.500 13,3 14,16 9,17" fill="#d9b74c"/><polygon points="2.500,5 9,7 9.500,22 2,20.500" fill="#f3dc82"/></svg>
<div class="dlabel" style="left:51px;top:86.500px;width:50px">Программы</div>

<div class="abs" style="left:1181px;top:4.500px;width:82.500px;height:84px;border-radius:3px 3px 0 0;background:linear-gradient(#fdfdfd,#f2f2f2 70%,#d6d6d6);box-shadow:0 1px 3px rgba(0,0,0,.5)"></div>
<div class="abs" style="left:1181px;top:91.500px;width:82.500px;height:85px;border-radius:0 0 3px 3px;background:linear-gradient(#f47a1c,#ee6c10 60%,#d95c08);box-shadow:0 1px 3px rgba(0,0,0,.5)"></div>
<div class="abs" style="left:1193.6px;top:21px;width:1px;height:54px;background:#e6e6e6"></div>
<div class="abs" style="left:1205.2px;top:21px;width:1px;height:54px;background:#e6e6e6"></div>
<div class="abs" style="left:1216.7px;top:21px;width:1px;height:54px;background:#e6e6e6"></div>
<div class="abs" style="left:1228.2px;top:21px;width:1px;height:54px;background:#e6e6e6"></div>
<div class="abs" style="left:1239.7px;top:21px;width:1px;height:54px;background:#e6e6e6"></div>
<div class="abs" style="left:1251.2px;top:21px;width:1px;height:54px;background:#e6e6e6"></div>
<div class="abs" style="left:1185.5px;top:84.500px;width:3px;height:11px;border-radius:1.500px;background:linear-gradient(90deg,#fff,#aaa);box-shadow:0 0 1px #333"></div>
<div class="abs" style="left:1192.8px;top:84.500px;width:3px;height:11px;border-radius:1.500px;background:linear-gradient(90deg,#fff,#aaa);box-shadow:0 0 1px #333"></div>
<div class="abs" style="left:1200.1px;top:84.500px;width:3px;height:11px;border-radius:1.500px;background:linear-gradient(90deg,#fff,#aaa);box-shadow:0 0 1px #333"></div>
<div class="abs" style="left:1207.4px;top:84.500px;width:3px;height:11px;border-radius:1.500px;background:linear-gradient(90deg,#fff,#aaa);box-shadow:0 0 1px #333"></div>
<div class="abs" style="left:1214.7px;top:84.500px;width:3px;height:11px;border-radius:1.500px;background:linear-gradient(90deg,#fff,#aaa);box-shadow:0 0 1px #333"></div>
<div class="abs" style="left:1222.0px;top:84.500px;width:3px;height:11px;border-radius:1.500px;background:linear-gradient(90deg,#fff,#aaa);box-shadow:0 0 1px #333"></div>
<div class="abs" style="left:1229.3px;top:84.500px;width:3px;height:11px;border-radius:1.500px;background:linear-gradient(90deg,#fff,#aaa);box-shadow:0 0 1px #333"></div>
<div class="abs" style="left:1236.6px;top:84.500px;width:3px;height:11px;border-radius:1.500px;background:linear-gradient(90deg,#fff,#aaa);box-shadow:0 0 1px #333"></div>
<div class="abs" style="left:1243.9px;top:84.500px;width:3px;height:11px;border-radius:1.500px;background:linear-gradient(90deg,#fff,#aaa);box-shadow:0 0 1px #333"></div>
<div class="abs" style="left:1251.2px;top:84.500px;width:3px;height:11px;border-radius:1.500px;background:linear-gradient(90deg,#fff,#aaa);box-shadow:0 0 1px #333"></div>
<div class="abs" style="left:1258.5px;top:84.500px;width:3px;height:11px;border-radius:1.500px;background:linear-gradient(90deg,#fff,#aaa);box-shadow:0 0 1px #333"></div>
<div class="abs t" style="left:1192px;top:10.500px;width:60px;text-align:center;font-size:6.7px;color:#222">ноя 17</div>
<svg class="abs" style="left:1185.500px;top:11.500px" width="4" height="5" viewBox="0 0 4 5"><path d="M4 0V5L0 2.500Z" fill="#666"/></svg>
<svg class="abs" style="left:1254.500px;top:11.500px" width="4" height="5" viewBox="0 0 4 5"><path d="M0 0V5L4 2.500Z" fill="#666"/></svg>
<div class="abs t" style="left:1181.8px;top:23.500px;width:12px;text-align:center;font-size:7px;color:#666">П</div>
<div class="abs t" style="left:1193.4px;top:23.500px;width:12px;text-align:center;font-size:7px;color:#666">В</div>
<div class="abs t" style="left:1204.9px;top:23.500px;width:12px;text-align:center;font-size:7px;color:#e8690c">С</div>
<div class="abs t" style="left:1216.4px;top:23.500px;width:12px;text-align:center;font-size:7px;color:#666">Ч</div>
<div class="abs t" style="left:1227.9px;top:23.500px;width:12px;text-align:center;font-size:7px;color:#666">П</div>
<div class="abs t" style="left:1239.4px;top:23.500px;width:12px;text-align:center;font-size:7px;color:#666">С</div>
<div class="abs t" style="left:1250.9px;top:23.500px;width:12px;text-align:center;font-size:7px;color:#666">В</div>
<div class="abs t" style="left:1181.8px;top:31.7px;width:12px;text-align:center;font-size:7px;color:#c8c8c8">30</div>
<div class="abs t" style="left:1193.4px;top:31.7px;width:12px;text-align:center;font-size:7px;color:#c8c8c8">31</div>
<div class="abs t" style="left:1204.9px;top:31.7px;width:12px;text-align:center;font-size:7px;color:#0a0a0a">1</div>
<div class="abs t" style="left:1216.4px;top:31.7px;width:12px;text-align:center;font-size:7px;color:#0a0a0a">2</div>
<div class="abs t" style="left:1227.9px;top:31.7px;width:12px;text-align:center;font-size:7px;color:#0a0a0a">3</div>
<div class="abs t" style="left:1239.4px;top:31.7px;width:12px;text-align:center;font-size:7px;color:#0a0a0a">4</div>
<div class="abs t" style="left:1250.9px;top:31.7px;width:12px;text-align:center;font-size:7px;color:#0a0a0a">5</div>
<div class="abs t" style="left:1181.8px;top:40.3px;width:12px;text-align:center;font-size:7px;color:#0a0a0a">6</div>
<div class="abs t" style="left:1193.4px;top:40.3px;width:12px;text-align:center;font-size:7px;color:#0a0a0a">7</div>
<div class="abs t" style="left:1204.9px;top:40.3px;width:12px;text-align:center;font-size:7px;color:#0a0a0a">8</div>
<div class="abs t" style="left:1216.4px;top:40.3px;width:12px;text-align:center;font-size:7px;color:#0a0a0a">9</div>
<div class="abs t" style="left:1227.9px;top:40.3px;width:12px;text-align:center;font-size:7px;color:#0a0a0a">10</div>
<div class="abs t" style="left:1239.4px;top:40.3px;width:12px;text-align:center;font-size:7px;color:#0a0a0a">11</div>
<div class="abs t" style="left:1250.9px;top:40.3px;width:12px;text-align:center;font-size:7px;color:#0a0a0a">12</div>
<div class="abs t" style="left:1181.8px;top:48.7px;width:12px;text-align:center;font-size:7px;color:#0a0a0a">13</div>
<div class="abs t" style="left:1193.4px;top:48.7px;width:12px;text-align:center;font-size:7px;color:#0a0a0a">14</div>
<div class="abs t" style="left:1204.9px;top:48.7px;width:12px;text-align:center;font-size:7px;color:#0a0a0a">15</div>
<div class="abs t" style="left:1216.4px;top:48.7px;width:12px;text-align:center;font-size:7px;color:#0a0a0a">16</div>
<div class="abs t" style="left:1227.9px;top:48.7px;width:12px;text-align:center;font-size:7px;color:#0a0a0a">17</div>
<div class="abs t" style="left:1239.4px;top:48.7px;width:12px;text-align:center;font-size:7px;color:#0a0a0a">18</div>
<div class="abs t" style="left:1250.9px;top:48.7px;width:12px;text-align:center;font-size:7px;color:#0a0a0a">19</div>
<div class="abs t" style="left:1181.8px;top:57.2px;width:12px;text-align:center;font-size:7px;color:#0a0a0a">20</div>
<div class="abs t" style="left:1193.4px;top:57.2px;width:12px;text-align:center;font-size:7px;color:#0a0a0a">21</div>
<div class="abs t" style="left:1204.9px;top:57.2px;width:12px;text-align:center;font-size:7px;color:#0a0a0a">22</div>
<div class="abs t" style="left:1216.4px;top:57.2px;width:12px;text-align:center;font-size:7px;color:#0a0a0a">23</div>
<div class="abs t" style="left:1227.9px;top:57.2px;width:12px;text-align:center;font-size:7px;color:#0a0a0a">24</div>
<div class="abs t" style="left:1239.4px;top:57.2px;width:12px;text-align:center;font-size:7px;color:#0a0a0a">25</div>
<div class="abs t" style="left:1250.9px;top:57.2px;width:12px;text-align:center;font-size:7px;color:#0a0a0a">26</div>
<div class="abs t" style="left:1181.8px;top:65.8px;width:12px;text-align:center;font-size:7px;color:#0a0a0a">27</div>
<div class="abs t" style="left:1193.4px;top:65.8px;width:12px;text-align:center;font-size:7px;color:#0a0a0a">28</div>
<div class="abs" style="left:1205.9px;top:65.2px;width:10px;height:8.500px;background:#e8690c"></div>
<div class="abs t" style="left:1204.9px;top:65.8px;width:12px;text-align:center;font-size:7px;color:#fff">29</div>
<div class="abs t" style="left:1216.4px;top:65.8px;width:12px;text-align:center;font-size:7px;color:#0a0a0a">30</div>
<div class="abs t" style="left:1227.9px;top:65.8px;width:12px;text-align:center;font-size:7px;color:#c8c8c8">1</div>
<div class="abs t" style="left:1239.4px;top:65.8px;width:12px;text-align:center;font-size:7px;color:#c8c8c8">2</div>
<div class="abs t" style="left:1250.9px;top:65.8px;width:12px;text-align:center;font-size:7px;color:#c8c8c8">3</div>
<div class="abs t" style="left:1181px;top:101px;width:82.500px;text-align:center;font-size:8.6px;color:#fff">среда</div>
<div class="abs t" style="left:1172px;top:110px;width:100px;text-align:center;font-size:52px;color:#fff;transform:scaleX(.80)">29</div>
<div class="abs t" style="left:1181px;top:162px;width:82.500px;text-align:center;font-size:8.7px;color:#fff">Ноябрь 2017</div>
<div id="win">
<!-- coordinates inside #win are relative to (255,73) because of 1px border -->
<div id="wi" style="left:-255px;top:-73px;width:1280px;height:720px">
<!-- status -->
<svg style="left:256px;top:74px" width="9" height="8" viewBox="0 0 9 8"><path d="M0.5 5.2 L3 6.6 L4 5.4 L6.4 3.6 A1.7 1.7 0 1 0 5 2.2 L3.2 4.4 L1 4 Z" fill="#e0707a"/></svg>
<div class="t" style="left:264px;top:75px;font-size:6.5px;color:#e07078">Steam не доступен.</div>
<div class="t" style="left:264px;top:83.5px;font-size:6.5px;color:#e07078">Загружено 0 обоев из кеша.</div>
<!-- title -->
<div class="t" style="left:540px;top:75.500px;width:200px;text-align:center;font-size:9.3px;color:#222">Просмотр обоев</div>
<!-- window controls -->
<div style="left:959px;top:80px;width:6px;height:2px;background:#111"></div>
<div style="left:977px;top:76px;width:8px;height:6px;border:1px solid #222;border-top-width:2px"></div>
<div style="left:991px;top:72px;width:32px;height:13px;background:#d9534f"></div>
<svg style="left:1003px;top:75px" width="8" height="8" viewBox="0 0 8 8"><path d="M1 1L7 7M7 1L1 7" stroke="#fff" stroke-width="1.4"/></svg>

<!-- tab row -->
<div class="t" style="left:266px;top:96.5px;font-size:11.3px;color:#222">Просмотр:</div>
<div style="left:323px;top:92px;width:86px;height:19px;background:#0a78d2"></div>
<svg style="left:326px;top:96px" width="11" height="11" viewBox="0 0 11 11"><path d="M0.5 0.5h8l2 2v8h-10z" fill="#fff"/><rect x="2.5" y="0.5" width="5" height="3.4" fill="#0a78d2"/><rect x="5.6" y="1" width="1.3" height="2.2" fill="#fff"/><rect x="2.2" y="6" width="6.6" height="4" fill="#0a78d2"/><rect x="3" y="6.8" width="5" height="2.6" fill="#fff"/></svg>
<div class="t" style="left:339px;top:96.5px;font-size:11.3px;color:#fff">Установлено</div>
<div style="left:412px;top:92px;width:83px;height:19px;background:#f4f8fb;border:1px solid #6aa5d8"></div>
<svg style="left:416px;top:96px" width="12" height="11" viewBox="0 0 12 11"><circle cx="8.4" cy="3.6" r="2.6" fill="none" stroke="#333" stroke-width="1.5"/><path d="M0.2 6.4 L4 8 L6.4 5.2 L7.6 6.4 L5 9 A2 2 0 0 1 1.6 9.4 L0.2 8.6 Z" fill="#333"/></svg>
<div class="t" style="left:430px;top:96.5px;font-size:11.3px;color:#333">Мастерская</div>
<div style="left:266px;top:110.5px;width:548px;height:2px;background:#1676c4"></div>
<!-- right icons -->
<svg style="left:744px;top:93px" width="12" height="14" viewBox="0 0 12 14"><path d="M0 0h7.5l4.5 4.5v9.5h-12z" fill="#0a78d2"/><path d="M7.5 0v4.5h4.5" fill="#f2f2f2" stroke="#0a78d2" stroke-width=".6"/></svg>
<svg style="left:770px;top:93px" width="15" height="13" viewBox="0 0 15 13"><rect x=".75" y=".75" width="13.5" height="8.5" rx="1" fill="none" stroke="#0a78d2" stroke-width="1.5"/><rect x="1" y="7" width="13" height="2.5" fill="#0a78d2"/><rect x="6" y="9.5" width="3" height="2" fill="#0a78d2"/><rect x="4.5" y="11.3" width="6" height="1.4" fill="#0a78d2"/></svg>
<svg style="left:798px;top:94px" width="13" height="13" viewBox="-6.5 -6.5 13 13"><g fill="#0a78d2"><circle r="4.4"/><rect x="-1.3" y="-6.3" width="2.6" height="12.6" rx=".5"/><rect x="-1.3" y="-6.3" width="2.6" height="12.6" rx=".5" transform="rotate(45)"/><rect x="-1.3" y="-6.3" width="2.6" height="12.6" rx=".5" transform="rotate(90)"/><rect x="-1.3" y="-6.3" width="2.6" height="12.6" rx=".5" transform="rotate(135)"/></g><circle r="1.9" fill="#f2f2f2"/></svg>

<!-- search row -->
<div style="left:266px;top:117px;width:172px;height:22px;background:#fff;border:1px solid #e2e2e2;border-radius:1px"></div>
<div class="t" style="left:274px;top:123.5px;font-size:9.4px;color:#aaa">Поиск</div>
<svg style="left:423px;top:122px" width="11" height="11" viewBox="0 0 11 11"><circle cx="4.4" cy="4.4" r="3.3" fill="none" stroke="#222" stroke-width="1.5"/><path d="M6.8 6.8L10 10" stroke="#222" stroke-width="1.8" stroke-linecap="round"/></svg>
<div class="t" style="left:446px;top:123.5px;font-size:9.3px;color:#2a78b6">Фильтры</div>
<svg style="left:491px;top:122px" width="9" height="10" viewBox="0 0 9 10"><path d="M0 0.5h9L5.6 4.6V9.5L3.4 8V4.6Z" fill="#1676c4"/></svg>
<svg style="left:651px;top:126px" width="10" height="6" viewBox="0 0 10 6"><path d="M0 6L5 0.5L10 6Z" fill="#222"/></svg>
<div class="dd" style="left:667px;top:119px;width:147px;height:17.5px;padding-left:14px;font-size:9.3px">Имя</div>

<svg width="0" height="0" style="left:0;top:0"><defs><filter id="f1" x="-20%" y="-20%" width="140%" height="140%"><feGaussianBlur stdDeviation=".6"/></filter><filter id="f15" x="-20%" y="-20%" width="140%" height="140%"><feGaussianBlur stdDeviation="1"/></filter><filter id="f2" x="-20%" y="-20%" width="140%" height="140%"><feGaussianBlur stdDeviation="1.600"/></filter><filter id="f4" x="-30%" y="-30%" width="160%" height="160%"><feGaussianBlur stdDeviation="3.500"/></filter></defs></svg>
<div class="thumb" style="left:266px;top:131px;background:#050505;clip-path:inset(15px -4px -4px -4px)"><svg style="left:0;top:0" width="85.5" height="85" viewBox="0 0 85.5 85" preserveAspectRatio="none" ><circle cx="21.5" cy="39.9" r="0.6" fill="#d8a468" opacity="0.42"/><circle cx="40.9" cy="41.6" r="1.1" fill="#d8a468" opacity="0.15"/><circle cx="70.7" cy="27.4" r="0.5" fill="#d8a468" opacity="0.21"/><circle cx="60.8" cy="39.8" r="1.1" fill="#d8a468" opacity="0.29"/><circle cx="54.4" cy="22.6" r="0.5" fill="#d8a468" opacity="0.41"/><circle cx="44.9" cy="48.6" r="0.4" fill="#d8a468" opacity="0.20"/><circle cx="80.5" cy="17.9" r="0.4" fill="#d8a468" opacity="0.40"/><circle cx="24.1" cy="42.2" r="0.8" fill="#d8a468" opacity="0.36"/><circle cx="77.5" cy="33.4" r="1.1" fill="#d8a468" opacity="0.28"/><circle cx="78.7" cy="54.7" r="0.4" fill="#d8a468" opacity="0.16"/><circle cx="42.6" cy="27.4" r="0.8" fill="#d8a468" opacity="0.38"/><circle cx="72.1" cy="34.5" r="0.8" fill="#d8a468" opacity="0.32"/><circle cx="45.8" cy="33.9" r="0.5" fill="#d8a468" opacity="0.42"/><circle cx="57.9" cy="56.9" r="0.6" fill="#d8a468" opacity="0.45"/><circle cx="57.0" cy="23.2" r="0.6" fill="#d8a468" opacity="0.44"/><circle cx="76.2" cy="41.0" r="0.5" fill="#d8a468" opacity="0.34"/><circle cx="83.0" cy="27.8" r="0.4" fill="#d8a468" opacity="0.17"/><circle cx="72.0" cy="59.6" r="0.4" fill="#d8a468" opacity="0.25"/><circle cx="7.5" cy="55.5" r="0.4" fill="#d8a468" opacity="0.24"/><circle cx="65.0" cy="54.4" r="0.4" fill="#d8a468" opacity="0.33"/><circle cx="64.5" cy="32.6" r="1.1" fill="#d8a468" opacity="0.25"/><circle cx="74.2" cy="59.1" r="1.1" fill="#d8a468" opacity="0.22"/><circle cx="5.0" cy="16.3" r="0.4" fill="#d8a468" opacity="0.33"/><circle cx="4.6" cy="24.7" r="0.8" fill="#d8a468" opacity="0.24"/><circle cx="23.6" cy="46.3" r="0.6" fill="#d8a468" opacity="0.24"/><circle cx="80.6" cy="55.5" r="0.8" fill="#d8a468" opacity="0.26"/><circle cx="73.3" cy="33.0" r="1.1" fill="#d8a468" opacity="0.35"/><circle cx="10.4" cy="58.8" r="1.1" fill="#d8a468" opacity="0.23"/><circle cx="54.0" cy="47.5" r="0.6" fill="#d8a468" opacity="0.28"/><circle cx="23.2" cy="29.3" r="0.6" fill="#d8a468" opacity="0.15"/><circle cx="36.0" cy="41.5" r="0.4" fill="#d8a468" opacity="0.26"/><circle cx="50.3" cy="21.9" r="0.6" fill="#d8a468" opacity="0.29"/><circle cx="57.7" cy="31.5" r="0.6" fill="#d8a468" opacity="0.37"/><circle cx="3.8" cy="18.7" r="0.4" fill="#d8a468" opacity="0.44"/></svg><div class="ov"></div><div class="lb">LightRain_TMF</div></div>
<div class="thumb" style="left:354.5px;top:131px;background:#1d5fc4;clip-path:inset(15px -4px -4px -4px)"><svg style="left:0;top:0" width="85.5" height="85" viewBox="0 0 85.5 85" preserveAspectRatio="none" ><filter id="smoke" x="0" y="0" width="100%" height="100%" color-interpolation-filters="sRGB"><feTurbulence type="fractalNoise" baseFrequency=".04 .055" numOctaves="4" seed="8" result="n"/><feColorMatrix in="n" type="matrix" values="1.100 1.100 0 0 -1  2.300 -.6 0 0 -0.300  .9 0 0 0 0.500  0 0 0 0 1"/></filter>
<rect width="86" height="85" filter="url(#smoke)"/>
<g filter="url(#f4)"><ellipse cx="30" cy="30" rx="20" ry="11" fill="#8ccfff" opacity=".55"/><ellipse cx="68" cy="26" rx="10" ry="8" fill="#8a3a9c" opacity=".5"/></g>
<rect y="50" width="86" height="35" fill="#0c2a70" opacity=".8" filter="url(#f2)"/></svg><div class="ov"></div><div class="lb">Magic Cloth</div></div>
<div class="thumb" style="left:443px;top:131px;background:#030805;clip-path:inset(15px -4px -4px -4px)"><svg style="left:0;top:0" width="85.5" height="85" viewBox="0 0 85.5 85" preserveAspectRatio="none" ><rect x="3.0" y="8" width=".8" height="43" fill="#2c9e3c" opacity="0.20"/><rect x="7.0" y="10" width=".8" height="38" fill="#2c9e3c" opacity="0.14"/><rect x="10.0" y="11" width=".8" height="50" fill="#2c9e3c" opacity="0.14"/><rect x="14.0" y="11" width=".8" height="59" fill="#2c9e3c" opacity="0.09"/><rect x="19.0" y="17" width=".8" height="57" fill="#2c9e3c" opacity="0.14"/><rect x="23.0" y="7" width=".8" height="60" fill="#2c9e3c" opacity="0.13"/><rect x="27.0" y="6" width=".8" height="42" fill="#2c9e3c" opacity="0.22"/><rect x="31.0" y="3" width=".8" height="36" fill="#2c9e3c" opacity="0.15"/><rect x="34.0" y="25" width=".8" height="42" fill="#2c9e3c" opacity="0.25"/><rect x="38.0" y="5" width=".8" height="37" fill="#2c9e3c" opacity="0.21"/><rect x="42.0" y="27" width=".8" height="43" fill="#2c9e3c" opacity="0.13"/><rect x="47.0" y="4" width=".8" height="46" fill="#2c9e3c" opacity="0.12"/><rect x="51.0" y="24" width=".8" height="62" fill="#2c9e3c" opacity="0.12"/><rect x="55.0" y="8" width=".8" height="60" fill="#2c9e3c" opacity="0.21"/><rect x="60.0" y="24" width=".8" height="37" fill="#2c9e3c" opacity="0.11"/><rect x="64.0" y="9" width=".8" height="60" fill="#2c9e3c" opacity="0.13"/><rect x="69.0" y="10" width=".8" height="41" fill="#2c9e3c" opacity="0.16"/><rect x="73.0" y="12" width=".8" height="66" fill="#2c9e3c" opacity="0.11"/><rect x="78.0" y="0" width=".8" height="67" fill="#2c9e3c" opacity="0.26"/><rect x="82.0" y="30" width=".8" height="42" fill="#2c9e3c" opacity="0.27"/></svg><div class="ov"></div><div class="lb lb2">Matrix Falling Code Live<br>Viz</div></div>
<div class="thumb" style="left:531.5px;top:131px;background:#120a28;clip-path:inset(15px -4px -4px -4px)"><svg style="left:0;top:0" width="85.5" height="85" viewBox="0 0 85.5 85" preserveAspectRatio="none" ><g filter="url(#f2)"><ellipse cx="43" cy="38" rx="15" ry="13" fill="#6a3a98"/><ellipse cx="43" cy="35" rx="10" ry="7" fill="#a868c0"/><ellipse cx="43" cy="31" rx="14" ry="3" fill="#5a6ac8" opacity=".6"/></g></svg></div>
<div class="thumb" style="left:620px;top:131px;background:#040804;clip-path:inset(15px -4px -4px -4px)"><svg style="left:0;top:0" width="85.5" height="85" viewBox="0 0 85.5 85" preserveAspectRatio="none" ><g filter="url(#f1)"><polygon points="10,40 66,40 86,22 86,14 50,14 30,26" fill="#2fd235"/><polygon points="34,14 60,14 40,22 22,30" fill="#0c3a10"/><polygon points="60,32 86,24 86,30 66,40" fill="#0a2a0c"/><polygon points="0,30 14,22 20,26 4,38" fill="#1a8a20"/></g></svg></div>
<div class="thumb" style="left:708.5px;top:131px;background:#2c2036;clip-path:inset(15px -4px -4px -4px)"><svg style="left:0;top:0" width="85.5" height="85" viewBox="0 0 85.5 85" preserveAspectRatio="none" ><g filter="url(#f4)"><ellipse cx="40" cy="30" rx="30" ry="12" fill="#6a4a74"/><ellipse cx="60" cy="22" rx="14" ry="6" fill="#8a6a8a"/><rect x="0" y="40" width="86" height="20" fill="#1c1426"/></g></svg></div>
<div class="thumb" style="left:266px;top:219.5px;background:#b6c8d0"><svg style="left:0;top:0" width="85.5" height="85" viewBox="0 0 85.5 85" preserveAspectRatio="none" ><linearGradient id="rn" x1="0" y1="0" x2="0" y2="1"><stop offset="0" stop-color="#cfdfe8"/><stop offset=".3" stop-color="#c4d6e0"/><stop offset=".62" stop-color="#9db4c0"/><stop offset=".7" stop-color="#7f9aa6"/><stop offset="1" stop-color="#5f7c88"/></linearGradient><rect width="86" height="85" fill="url(#rn)"/>
<g filter="url(#f2)" opacity=".8"><rect x="16" y="22" width="9" height="34" fill="#8ea8b8"/><rect x="28" y="26" width="8" height="30" fill="#9ab2c0"/><rect x="37" y="24" width="6" height="32" fill="#86a0b0"/><rect x="50" y="20" width="9" height="36" fill="#9cb4c2"/><rect x="62" y="28" width="12" height="28" fill="#a4bac6"/><rect x="2" y="36" width="12" height="20" fill="#8098a6"/><rect x="76" y="32" width="9" height="24" fill="#a8bcc8"/><rect x="43.500" y="26" width="3" height="36" fill="#eef6fa"/></g>
<g filter="url(#f4)"><rect x="-6" y="-4" width="16" height="60" fill="#4a6a80" opacity=".65"/><rect x="-6" y="-8" width="98" height="14" fill="#7f9eb0" opacity=".6"/><rect x="78" y="-4" width="12" height="60" fill="#7f9eb0" opacity=".4"/></g></svg><div class="ov"></div><div class="lb">Rain</div></div>
<div class="thumb" style="left:354.5px;top:219.5px;background:#14100d"><svg style="left:0;top:0" width="85.5" height="85" viewBox="0 0 85.5 85" preserveAspectRatio="none" ><linearGradient id="rd" x1="0" y1="0" x2="0" y2="1"><stop offset="0" stop-color="#1c1613"/><stop offset=".35" stop-color="#0e0b09"/><stop offset="1" stop-color="#0a0807"/></linearGradient><rect width="86" height="85" fill="url(#rd)"/>
<g filter="url(#f15)"><rect x="0" y="35" width="86" height="3" fill="#3a3026" opacity=".8"/><rect x="4" y="36" width="30" height="1.500" fill="#b8ac98" opacity=".7"/><rect x="50" y="36" width="32" height="1.300" fill="#6a5a48" opacity=".7"/>
<polygon points="0,60 0,50 44,37.500 48,37 49,39" fill="#f2eee2"/><polygon points="0,63 0,59 48,38.500 49,40" fill="#a89880" opacity=".6"/>
<polygon points="49,39 51.500,39 37,85 27,85" fill="#c85424" opacity=".9"/><polygon points="53,40 55,40 75,85 67,85" fill="#a8341c" opacity=".85"/><polygon points="47,39 49,39 24,85 18,85" fill="#4a2a1c" opacity=".7"/></g>
<g filter="url(#f1)" opacity=".5"><circle cx="46" cy="35" r="1.300" fill="#ffe"/><circle cx="60" cy="37" r=".9" fill="#ffd"/><circle cx="30" cy="52" r=".8" fill="#fff"/><circle cx="40" cy="58" r=".8" fill="#fdb"/></g></svg><div class="ov"></div><div class="lb">Raindrops at Night</div></div>
<div class="thumb" style="left:443px;top:219.5px;background:#d8e8f0"><svg style="left:0;top:0" width="85.5" height="85" viewBox="0 0 85.5 85" preserveAspectRatio="none" ><linearGradient id="rv" x1="0" y1="0" x2="0" y2="1"><stop offset="0" stop-color="#dcebf3"/><stop offset=".6" stop-color="#c8dce6"/><stop offset="1" stop-color="#7f9aa8"/></linearGradient><rect width="86" height="85" fill="url(#rv)"/>
<g filter="url(#f1)" fill="none" stroke="#58dcea" stroke-width="5" stroke-dasharray="1.200 .8" opacity=".9"><path d="M34 0 Q24 8 26 18 Q12 24 16 36 Q2 46 10 58 Q6 68 18 82"/><path d="M28 14 Q20 24 22 34 Q12 44 16 54"/></g>
<text x="28" y="47" font-family="Liberation Sans, sans-serif" font-size="8" fill="#8fe4ee">20</text></svg><div class="ov"></div><div class="lb lb2">Raindrop 2017 Audio<br>Vizualizer</div></div>
<div class="thumb" style="left:266px;top:308px;background:#efe3cd"><svg style="left:0;top:0" width="85.5" height="85" viewBox="0 0 85.5 85" preserveAspectRatio="none" ><rect width="86" height="85" fill="#efe3cd"/>
<pattern id="dp" width="2.2" height="2.2" patternUnits="userSpaceOnUse"><circle cx="1.1" cy="1.1" r=".45" fill="#d9c7a8"/></pattern><rect x="16" width="70" height="85" fill="url(#dp)"/>
<rect x="2.500" y="0" width="3.500" height="58" fill="#7c1a12"/><rect x="6" y="0" width="3.500" height="58" fill="#cf2e16"/><rect x="9.500" y="0" width="3.500" height="58" fill="#ee7420"/><rect x="13" y="0" width="3.500" height="58" fill="#f6b24a"/>
<circle cx="18.500" cy="65.500" r="15" fill="#7c1a12"/><circle cx="18.500" cy="65.500" r="12" fill="#cf2e16"/><circle cx="18.500" cy="65.500" r="9" fill="#ee7420"/><circle cx="18.500" cy="65.500" r="6" fill="#f6b24a"/><circle cx="18.500" cy="65.500" r="3" fill="#b9b2a4"/>
<rect x="19" y="71" width="48" height="3.500" fill="#ee7420"/><rect x="19" y="74.500" width="48" height="3.500" fill="#cf2e16"/><rect x="19" y="78" width="48" height="3.500" fill="#7c1a12"/>
<pattern id="rp" width="4" height="4" patternUnits="userSpaceOnUse"><circle cx="2" cy="2" r="1.200" fill="#b52a1a"/></pattern><rect x="58" y="68" width="26" height="16" fill="url(#rp)"/></svg><div class="ov"></div><div class="lb">Retro</div></div>
<div class="thumb" style="left:354.5px;top:308px;background:#060a14"><svg style="left:0;top:0" width="85.5" height="85" viewBox="0 0 85.5 85" preserveAspectRatio="none" ><rect width="86" height="85" fill="#04060a"/><radialGradient id="sp" cx=".5" cy="1.250" r=".8"><stop offset="0" stop-color="#2a5a9c"/><stop offset=".55" stop-color="#15305c"/><stop offset=".75" stop-color="#0a1630"/><stop offset="1" stop-color="#04060a" stop-opacity="0"/></radialGradient><rect width="86" height="85" fill="url(#sp)"/>
<g filter="url(#f1)"><polygon points="16,30 40,18 74,22 80,32 60,46 30,50" fill="#6e6a62"/><polygon points="22,30 42,20 70,24 60,34 30,40" fill="#98948a"/><polygon points="40,44 60,42 66,68 46,72" fill="#85817a"/><polygon points="46,50 58,48 62,66 50,68" fill="#34322e"/><polygon points="28,28 50,18 54,26 32,36" fill="#3a3834"/><polygon points="60,20 82,14 84,20 64,28" fill="#54524c"/>
<polygon points="2,34 24,26 27,33 6,42" fill="#ffa030"/><polygon points="10,50 34,40 37,47 14,57" fill="#f88224"/><polygon points="16,70 40,60 42,65 20,75" fill="#ec701e"/><polygon points="0,37 14,31 15,36" fill="#fff4c8"/><polygon points="8,53 22,47 23,51" fill="#ffe9a8"/>
<rect x="22" y="11" width="22" height="1.500" fill="#8a867c" transform="rotate(-8 33 12)"/><rect x="56" y="8" width="24" height="1.500" fill="#8a867c" transform="rotate(-8 68 9)"/><rect x="32" y="12" width="1.500" height="9" fill="#6a665e"/><rect x="68" y="9" width="1.500" height="9" fill="#6a665e"/></g></svg><div class="ov"></div><div class="lb">Ricepod</div></div>
<div class="thumb" style="left:443px;top:308px;background:#4a8a3c"><svg style="left:0;top:0" width="85.5" height="85" viewBox="0 0 85.5 85" preserveAspectRatio="none" ><rect width="86" height="85" fill="#41793a"/><g filter="url(#f1)"><path d="M18 0 Q30 14 16 30 Q4 44 22 56 Q34 62 28 85" stroke="#97917a" stroke-width="9" fill="none"/><rect x="0" y="58" width="40" height="27" fill="#2e6a2c"/>
<g fill="#f4f4ee"><circle cx="20" cy="24" r="2"/><circle cx="29" cy="31" r="2"/><circle cx="6" cy="38" r="2"/><circle cx="22" cy="43" r="2"/><circle cx="14" cy="54" r="2"/><circle cx="26" cy="54" r="2"/><circle cx="18" cy="66" r="1.600"/></g></g></svg><div class="ov"></div><div class="lb">Sheep</div></div>
<div class="thumb" style="left:266px;top:396.5px;background:#0a2628"><svg style="left:0;top:0" width="85.5" height="85" viewBox="0 0 85.5 85" preserveAspectRatio="none" ><radialGradient id="sk" cx=".5" cy=".4" r=".8"><stop offset="0" stop-color="#12383a"/><stop offset="1" stop-color="#06191b"/></radialGradient><rect width="86" height="85" fill="url(#sk)"/>
<radialGradient id="sb" cx=".42" cy=".3" r=".75"><stop offset="0" stop-color="#a39476"/><stop offset=".55" stop-color="#786a52"/><stop offset="1" stop-color="#352e24"/></radialGradient>
<g filter="url(#f1)"><ellipse cx="43" cy="30" rx="28" ry="25" fill="url(#sb)"/><path d="M24 44 Q22 60 32 64 L54 64 Q64 60 62 44Z" fill="#776a50"/>
<ellipse cx="31" cy="41" rx="8.500" ry="7" fill="#15130f"/><ellipse cx="55" cy="41" rx="8.500" ry="7" fill="#15130f"/><path d="M43 46 L38.500 56 Q43 58 47.500 56Z" fill="#1c1812"/><rect x="31" y="60" width="24" height="7" fill="#544a38"/><g stroke="#3a3226" stroke-width=".7"><path d="M35 60V67M39 60V67M43 60V67M47 60V67M51 60V67"/></g></g></svg><div class="ov"></div><div class="lb lb2">Skull_3D骷髅头<br>[Interactive]</div></div>
<div class="thumb" style="left:354.5px;top:396.5px;background:#030303"><svg style="left:0;top:0" width="85.5" height="85" viewBox="0 0 85.5 85" preserveAspectRatio="none" ><g filter="url(#f4)"><ellipse cx="43" cy="41" rx="42" ry="9" fill="#2e2412"/><ellipse cx="43" cy="40" rx="26" ry="4" fill="#5a4420"/><ellipse cx="43" cy="40" rx="11" ry="2" fill="#b08844"/></g><g filter="url(#f1)"><ellipse cx="44" cy="40" rx="4" ry="1.200" fill="#f4e4b0"/></g></svg><div class="ov"></div><div class="lb">Star Travel (1080 60 FPS)</div></div>
<div class="thumb" style="left:443px;top:396.5px;background:#18222e"><svg style="left:0;top:0" width="85.5" height="85" viewBox="0 0 85.5 85" preserveAspectRatio="none" ><linearGradient id="sw" x1="0" y1="0" x2="0" y2="1"><stop offset="0" stop-color="#33465c"/><stop offset=".6" stop-color="#1c2836"/><stop offset="1" stop-color="#0a0e14"/></linearGradient><rect width="86" height="85" fill="url(#sw)"/><g filter="url(#f1)"><path d="M16 22 Q22 20 25 28 L34 70 L2 72 L10 34 Q11 24 16 22Z" fill="#06080a"/></g></svg><div class="ov"></div><div class="lb lb2">Star Wars Episode VI - Da<br>Vader Ending Scene HD</div></div>
<div class="thumb" style="left:266px;top:485px;background:#2a7ad8"><svg style="left:0;top:0" width="85.5" height="85" viewBox="0 0 85.5 85" preserveAspectRatio="none" ><linearGradient id="te" x1="0" y1="0" x2="0" y2="1"><stop offset="0" stop-color="#1460d4"/><stop offset=".6" stop-color="#3a8ae6"/></linearGradient><rect width="86" height="85" fill="url(#te)"/>
<filter id="cl" x="-10%" y="-10%" width="120%" height="120%"><feTurbulence type="fractalNoise" baseFrequency=".13" numOctaves="3" seed="3" result="n"/><feDisplacementMap in="SourceGraphic" in2="n" scale="9" xChannelSelector="R" yChannelSelector="G"/><feGaussianBlur stdDeviation=".7"/></filter>
<g filter="url(#cl)"><g fill="#dfeaf6"><ellipse cx="36" cy="8" rx="13" ry="7"/><ellipse cx="40" cy="20" rx="8" ry="9"/><ellipse cx="46" cy="32" rx="10" ry="8"/></g><g fill="#f6f9fd"><ellipse cx="34" cy="6" rx="9" ry="4"/><ellipse cx="52" cy="42" rx="18" ry="9"/><ellipse cx="74" cy="44" rx="13" ry="10"/><ellipse cx="26" cy="50" rx="28" ry="8"/><ellipse cx="8" cy="47" rx="10" ry="7"/><ellipse cx="64" cy="54" rx="24" ry="5"/></g><g fill="#b9cde4"><ellipse cx="40" cy="57" rx="40" ry="2.500"/></g></g>
<rect y="59" width="86" height="26" fill="#17385a"/><g fill="#3f6a96"><rect x="2" y="64" width="22" height="4"/><rect x="30" y="64" width="26" height="4"/><rect x="62" y="64" width="22" height="4"/><rect x="2" y="72" width="22" height="5"/><rect x="30" y="72" width="26" height="5"/><rect x="62" y="72" width="22" height="5"/></g><rect x="0" y="0" width="18" height="2.500" fill="#0a1626" opacity=".8"/><rect x="62" y="0" width="24" height="2.500" fill="#0a1626" opacity=".8"/></svg><div class="ov"></div><div class="lb">Terrace</div></div>
<div class="thumb" style="left:354.5px;top:485px;background:#0f1a2c"><svg style="left:0;top:0" width="85.5" height="85" viewBox="0 0 85.5 85" preserveAspectRatio="none" ><rect width="86" height="85" fill="#0e1622"/><g filter="url(#f2)"><rect x="0" y="0" width="34" height="52" fill="#1c4564"/><rect x="0" y="0" width="14" height="30" fill="#2a6a8c"/><ellipse cx="72" cy="40" rx="12" ry="26" fill="#5a3614"/><ellipse cx="67" cy="48" rx="5" ry="13" fill="#8a5218"/><ellipse cx="80" cy="22" rx="8" ry="14" fill="#3a2410"/></g>
<g filter="url(#f1)"><path d="M2 0L14 30M20 0L10 26M26 4L22 40M6 10L30 34" stroke="#0a1420" stroke-width="1.600" fill="none"/><path d="M30 36Q33 24 41 22Q50 24 54 36L58 72L28 72Z" fill="#34363c"/><path d="M36 30L48 30L50 60L34 60Z" fill="#4a4640"/><ellipse cx="42" cy="16" rx="4.500" ry="5.500" fill="#a48c7c"/><path d="M37 13Q42 6 47 13L46 11Q42 8 38 11Z" fill="#c8c8c8"/><rect x="0" y="62" width="86" height="23" fill="#0a0e14"/></g></svg><div class="ov"></div><div class="lb lb2">The Witcher 3: Wild Hunt<br>Main Menu巫师3本体主…</div></div>
<div class="thumb" style="left:443px;top:485px;background:#2b2b2b"><svg style="left:0;top:0" width="85.5" height="85" viewBox="0 0 85.5 85" preserveAspectRatio="none" ><rect width="86" height="85" fill="#2d2d2d"/><filter id="smk" x="0" y="0" width="100%" height="100%" color-interpolation-filters="sRGB"><feTurbulence type="fractalNoise" baseFrequency=".11" numOctaves="4" seed="12"/><feColorMatrix type="matrix" values="0 0 0 0 .9  0 0 0 0 .9  0 0 0 0 .9  5 0 0 0 -2.350"/></filter>
<radialGradient id="smg" cx=".3" cy=".36" r=".36" gradientTransform="scale(1 1.500)"><stop offset="0" stop-color="#fff"/><stop offset=".45" stop-color="#fff" stop-opacity=".8"/><stop offset="1" stop-color="#fff" stop-opacity="0"/></radialGradient><mask id="smm"><rect width="86" height="85" fill="url(#smg)"/></mask>
<rect width="86" height="85" filter="url(#smk)" mask="url(#smm)"/></svg><div class="ov"></div><div class="lb">The Spirit</div></div>
<div class="thumb" style="left:531.5px;top:485px;background:#15243a"><svg style="left:0;top:0" width="85.5" height="85" viewBox="0 0 85.5 85" preserveAspectRatio="none" ><rect width="86" height="85" fill="#182a44"/><rect y="60" width="86" height="25" fill="#0d1826"/></svg><div class="ov"></div><div class="lb">Time lapse</div><div style="left:0;top:0;right:0;bottom:0;border:2px solid #2f86e0"></div></div>
<div class="thumb" style="left:620px;top:485px;background:#2a2010"><svg style="left:0;top:0" width="85.5" height="85" viewBox="0 0 85.5 85" preserveAspectRatio="none" ><linearGradient id="un" x1="0" y1="0" x2="1" y2="0"><stop offset="0" stop-color="#1c140a"/><stop offset=".6" stop-color="#6a5224"/><stop offset="1" stop-color="#8a6a30"/></linearGradient><rect width="86" height="85" fill="url(#un)"/></svg><div class="ov"></div><div class="lb">UNRAVEL 60fps</div></div>
<div class="thumb" style="left:708.5px;top:485px;background:#0c1830"><svg style="left:0;top:0" width="85.5" height="85" viewBox="0 0 85.5 85" preserveAspectRatio="none" ><rect width="86" height="85" fill="#0c1a34"/><g filter="url(#f2)"><path d="M30 85 Q50 60 90 66" stroke="#b0222c" stroke-width="7" fill="none"/><path d="M40 85 Q60 72 90 80" stroke="#7a1a30" stroke-width="5" fill="none"/></g></svg><div class="ov"></div><div class="lb">WRMMM</div></div>

<!-- list scrollbar -->
<div style="left:807px;top:146px;width:7px;height:425px;background:#fff;border:1px solid #4a7ea8"></div>
<div style="left:807px;top:329px;width:7px;height:168px;background:#0a78d2"></div>

<!-- bottom buttons -->
<div class="btn blue" style="left:273px;top:591px;width:98px;height:16.5px;font-size:9.3px;line-height:16.5px;padding-left:12px">Мастерская</div>
<svg style="left:290px;top:594px" width="10" height="10" viewBox="0 0 10 10"><path d="M9.6 2.2 L7.8 4 L6 3.9 L5.9 2.2 L7.7 0.4 A2.9 2.9 0 0 0 4.3 4.2 L0.5 8 A1.05 1.05 0 0 0 2 9.5 L5.8 5.7 A2.9 2.9 0 0 0 9.6 2.2Z" fill="#fff"/></svg>
<div class="btn blue" style="left:374px;top:591px;width:98.5px;height:16.5px;font-size:9.3px;line-height:16.5px;padding-left:12px">Магазин</div>
<svg style="left:399px;top:594px" width="11" height="10" viewBox="0 0 11 10"><path d="M0 0.6h1.8l.5 1.2h8.4L9.6 5.8H3.4l.3 1h5.8v1H2.9L1.2 1.6H0Z" fill="#fff"/><circle cx="3.8" cy="9" r=".95" fill="#fff"/><circle cx="8.6" cy="9" r=".95" fill="#fff"/></svg>
<div class="btn grey" style="left:273px;top:612px;width:98px;height:16.5px;font-size:9.3px;line-height:16.5px;padding-left:12px">Открыть файл</div>
<svg style="left:285px;top:615px" width="9" height="10" viewBox="0 0 9 10"><path d="M4.5 0L8.2 4H6V6.6H3V4H.8Z" fill="#222"/><path d="M0 7.2h2.4v.8h4.2v-.8H9V10H0Z" fill="#222"/></svg>
<div class="btn grey" style="left:374px;top:612px;width:98.5px;height:16.5px;font-size:9.3px;line-height:16.5px;padding-left:12px">Открыть URL</div>
<svg style="left:389px;top:615px" width="10" height="10" viewBox="0 0 10 10"><circle cx="5" cy="5" r="4.7" fill="#222"/><path d="M2 3.2c1-1.4 2.4-1.6 3.4-1.2l-.6 1.4-1.4.4.2 1.2 1.6.6.4 1.8-1 1.2C3 8.2 1.6 6 2 3.200Z M6.400 2.800 l1.6.4.6 1.6-.8 1.600-1-.8.200-1.400Z" fill="#d0d0d0"/></svg>

<!-- social -->
<div style="left:649px;top:611px;width:16px;height:16px;background:#0a78d2;border-radius:2.5px"></div>
<svg style="left:649px;top:611px" width="16" height="16" viewBox="0 0 16 16"><circle cx="10.4" cy="5.6" r="2.6" fill="none" stroke="#fff" stroke-width="1.3"/><path d="M0 8.400L4.400 10.200L7.800 7.200L9.200 8.800L6.200 11.400A2.100 2.100 0 0 1 2.400 12.200L0 11.200Z" fill="#fff"/><circle cx="4.400" cy="11.600" r="1.200" fill="#0a78d2"/></svg>
<div style="left:667.5px;top:611px;width:16px;height:16px;background:#0a78d2;border-radius:2.5px"></div>
<svg style="left:667.5px;top:611px" width="16" height="16" viewBox="0 0 16 16"><path d="M13.400 4.800c-.4.200-.8.300-1.300.4.500-.3.800-.700 1-1.200-.4.200-.9.400-1.400.5a2.200 2.200 0 0 0-3.800 2c-1.800-.1-3.500-1-4.600-2.300-.6 1-.3 2.300.7 3-.4 0-.7-.1-1-.3 0 1.100.8 2 1.800 2.200-.3.100-.7.100-1 0 .3.900 1.100 1.500 2.100 1.600-1 .700-2.100 1.100-3.300.900 1 .600 2.200 1 3.400 1 4.100 0 6.400-3.400 6.400-6.400v-.3c.4-.3.800-.7 1-1.100Z" fill="#fff"/></svg>
<div style="left:686px;top:611px;width:16px;height:16px;background:#0a78d2;border-radius:2.5px"></div>
<svg style="left:686px;top:611px" width="16" height="16" viewBox="0 0 16 16"><path d="M8.800 16V9.600H7V7.400h1.800V5.600c0-1.800 1.100-2.800 2.700-2.800.8 0 1.400.1 1.600.1v2H12c-.9 0-1 .4-1 1v1.500h2.100l-.3 2.200H11V16Z" fill="#fff"/></svg>

<!-- right panel -->
<div style="left:834px;top:91px;width:173px;height:172.500px;overflow:hidden;background:linear-gradient(#1a2a3f,#1f3249 40%,#31465c 72%,#43576b)">
<svg style="left:0;top:0" width="173" height="173" viewBox="0 0 173 173"><g fill="#c8d4e4">
<circle cx="78.3" cy="78.4" r="0.6" opacity="0.45"/>
<circle cx="147.9" cy="26.6" r="0.6" opacity="0.53"/>
<circle cx="137.2" cy="13.2" r="0.5" opacity="0.31"/>
<circle cx="93.2" cy="124.7" r="0.3" opacity="0.52"/>
<circle cx="68.5" cy="63.4" r="0.4" opacity="0.53"/>
<circle cx="143.9" cy="8.8" r="0.3" opacity="0.34"/>
<circle cx="41.9" cy="4.2" r="0.6" opacity="0.40"/>
<circle cx="102.2" cy="27.3" r="0.4" opacity="0.54"/>
<circle cx="86.5" cy="92.7" r="0.6" opacity="0.54"/>
<circle cx="70.4" cy="77.2" r="0.3" opacity="0.57"/>
<circle cx="54.5" cy="32.2" r="0.5" opacity="0.26"/>
<circle cx="97.4" cy="15.1" r="0.3" opacity="0.63"/>
<circle cx="66.9" cy="134.1" r="0.3" opacity="0.35"/>
<circle cx="160.4" cy="7.3" r="0.6" opacity="0.69"/>
<circle cx="68.8" cy="10.2" r="0.4" opacity="0.60"/>
<circle cx="46.7" cy="12.2" r="0.5" opacity="0.26"/>
<circle cx="70.9" cy="129.2" r="0.4" opacity="0.36"/>
<circle cx="17.5" cy="8.4" r="0.6" opacity="0.33"/>
<circle cx="96.8" cy="62.6" r="0.4" opacity="0.69"/>
<circle cx="133.1" cy="58.7" r="0.6" opacity="0.30"/>
<circle cx="72.8" cy="29.8" r="0.5" opacity="0.64"/>
<circle cx="168.7" cy="83.0" r="0.3" opacity="0.34"/>
<circle cx="68.2" cy="119.6" r="0.3" opacity="0.27"/>
<circle cx="25.3" cy="61.8" r="0.3" opacity="0.60"/>
<circle cx="56.9" cy="41.5" r="0.3" opacity="0.28"/>
<circle cx="36.1" cy="89.1" r="0.3" opacity="0.52"/>
<circle cx="64.3" cy="63.4" r="0.6" opacity="0.62"/>
<circle cx="23.5" cy="54.1" r="0.4" opacity="0.39"/>
<circle cx="39.5" cy="85.5" r="0.4" opacity="0.32"/>
<circle cx="108.8" cy="77.6" r="0.6" opacity="0.65"/>
<circle cx="104.4" cy="59.0" r="0.3" opacity="0.30"/>
<circle cx="88.6" cy="35.7" r="0.6" opacity="0.37"/>
<circle cx="142.5" cy="83.5" r="0.5" opacity="0.48"/>
<circle cx="160.8" cy="136.8" r="0.4" opacity="0.35"/>
<circle cx="96.8" cy="119.3" r="0.3" opacity="0.38"/>
<circle cx="158.7" cy="28.6" r="0.3" opacity="0.28"/>
<circle cx="71.2" cy="34.9" r="0.3" opacity="0.33"/>
<circle cx="63.8" cy="80.1" r="0.4" opacity="0.29"/>
<circle cx="23.9" cy="63.0" r="0.5" opacity="0.55"/>
<circle cx="119.6" cy="81.8" r="0.4" opacity="0.52"/>
<circle cx="159.8" cy="66.5" r="0.5" opacity="0.57"/>
<circle cx="166.6" cy="3.0" r="0.3" opacity="0.47"/>
<circle cx="126.4" cy="44.6" r="0.3" opacity="0.28"/>
<circle cx="94.5" cy="103.2" r="0.4" opacity="0.61"/>
<circle cx="158.3" cy="49.3" r="0.6" opacity="0.66"/>
<circle cx="150.7" cy="58.4" r="0.3" opacity="0.64"/>
<circle cx="99.1" cy="87.5" r="0.6" opacity="0.42"/>
<circle cx="2.2" cy="10.1" r="0.3" opacity="0.54"/>
<circle cx="171.8" cy="123.2" r="0.5" opacity="0.42"/>
<circle cx="127.2" cy="81.3" r="0.6" opacity="0.46"/>
<circle cx="93.6" cy="72.6" r="0.3" opacity="0.39"/>
<circle cx="15.2" cy="3.1" r="0.3" opacity="0.47"/>
<circle cx="106.3" cy="128.9" r="0.5" opacity="0.65"/>
<circle cx="63.7" cy="20.1" r="0.4" opacity="0.48"/>
<circle cx="130.4" cy="48.0" r="0.6" opacity="0.47"/>
<circle cx="41.8" cy="56.7" r="0.5" opacity="0.34"/>
<circle cx="74.5" cy="112.8" r="0.4" opacity="0.65"/>
<circle cx="66.5" cy="81.6" r="0.5" opacity="0.34"/>
<circle cx="23.3" cy="49.1" r="0.3" opacity="0.57"/>
<circle cx="164.4" cy="38.8" r="0.4" opacity="0.30"/>
<circle cx="81.5" cy="129.6" r="0.6" opacity="0.42"/>
<circle cx="90.0" cy="94.1" r="0.6" opacity="0.39"/>
<circle cx="143.4" cy="38.9" r="0.3" opacity="0.56"/>
<circle cx="48.6" cy="49.6" r="0.3" opacity="0.54"/>
<circle cx="70.1" cy="26.6" r="0.5" opacity="0.36"/>
<circle cx="24.4" cy="6.6" r="0.3" opacity="0.45"/>
<circle cx="109.0" cy="91.7" r="0.5" opacity="0.68"/>
<circle cx="118.4" cy="27.9" r="0.6" opacity="0.37"/>
<circle cx="123.6" cy="105.7" r="0.3" opacity="0.33"/>
<circle cx="47.1" cy="48.4" r="0.4" opacity="0.43"/>
<circle cx="137.0" cy="126.9" r="0.3" opacity="0.43"/>
<circle cx="154.4" cy="54.3" r="0.6" opacity="0.45"/>
<circle cx="108.2" cy="127.4" r="0.6" opacity="0.50"/>
<circle cx="112.9" cy="70.4" r="0.5" opacity="0.46"/>
<circle cx="112.7" cy="28.7" r="0.3" opacity="0.35"/>
<circle cx="155.7" cy="137.3" r="0.5" opacity="0.49"/>
<circle cx="136.8" cy="44.9" r="0.3" opacity="0.41"/>
<circle cx="14.3" cy="61.7" r="0.6" opacity="0.60"/>
<circle cx="84.3" cy="4.0" r="0.3" opacity="0.44"/>
<circle cx="6.1" cy="74.6" r="0.4" opacity="0.46"/>
</g><g filter="url(#f1)"><path d="M0 173V158L4 152L8 159L13 150L18 158L24 155L30 162L38 156L44 148L50 157L58 160L66 152L72 146L78 155L86 158L94 150L100 156L106 158L112 150L117 146L122 138L128 136L132 128L138 126L142 118L150 114L154 108L161 108L166 103L173 104V173Z" fill="#15222d"/></g></svg>
<div class="t" style="left:2.500px;top:31.500px;font-family:'Liberation Mono',monospace;font-size:64px;color:transparent;-webkit-text-stroke:.9px #8edbe8;text-shadow:0 0 2px rgba(110,220,245,.4);transform:scaleX(.74);transform-origin:0 0;letter-spacing:0">22<span style="position:static;margin:0 -13.500px">:</span>27<span style="position:static;margin:0 -13.500px">:</span>48</div>
</div>
<div class="t" style="left:827.5px;top:270.5px;font-size:8.2px;color:#a0a0a0">Название:</div>
<div class="t" style="left:902.5px;top:270.5px;font-size:8.4px;color:#333">Time lapse</div>
<div class="t" style="left:827.5px;top:286.5px;font-size:8.2px;color:#a0a0a0">Тип:</div>
<div class="t" style="left:902.5px;top:286.5px;font-size:8.4px;color:#333">Web</div>
<div class="t" style="left:827.5px;top:310.5px;font-size:9.3px;color:#333">Свойства</div>
<div style="left:875px;top:315px;width:125px;height:1px;background:#c4c4c4"></div>
<svg style="left:1005px;top:312px" width="10" height="6" viewBox="0 0 10 6"><path d="M0 0h10L5 5.600Z" fill="#0a78d2"/></svg>
<div class="t" style="left:827.5px;top:336px;font-size:9.3px;color:#333">Цветовая схема</div>
<div style="left:982px;top:332px;width:32px;height:18px;background:#d0d0d0"></div>
<div style="left:985px;top:334px;width:17px;height:14px;background:#000"></div>
<svg style="left:1006px;top:338px" width="6" height="5" viewBox="0 0 6 5"><path d="M0 0h6L3 4.600Z" fill="#222"/></svg>

<div class="btn blue" style="left:878px;top:608px;width:63px;height:17px;font-size:9.3px;line-height:17px">OK</div>
<div class="btn grey" style="left:944px;top:608px;width:63.5px;height:17px;font-size:9.3px;line-height:17px">Отмена</div>
</div>
</div>

<div id="dlg">
<div style="left:-482px;top:-169px;width:1280px;height:720px">
<!-- title bar -->
<div class="t" style="left:540px;top:172.5px;width:200px;text-align:center;font-size:9.3px;color:#333">Параметры</div>
<div style="left:732px;top:177px;width:6px;height:2px;background:#111"></div>
<div style="left:750px;top:172.500px;width:8px;height:6px;border:1px solid #777;border-top-width:2px"></div>
<div style="left:764px;top:168px;width:32px;height:14px;background:#d9534f"></div>
<svg style="left:776px;top:171px" width="8" height="8" viewBox="0 0 8 8"><path d="M1 1L7 7M7 1L1 7" stroke="#fff" stroke-width="1.400"/></svg>
<!-- tabs -->
<div class="t" style="left:497px;top:191px;font-size:9.3px;color:#555">Производительность</div>
<div style="left:593px;top:187px;width:38px;height:17px;background:#0a78d2"></div>
<div class="t" style="left:597px;top:191px;font-size:9.3px;color:#fff">Общие</div>
<div class="t" style="left:636.500px;top:191px;font-size:9.3px;color:#555">О приложении</div>
<div style="left:492.500px;top:203px;width:294.500px;height:2px;background:#1676c4"></div>
<!-- scroll area frame -->
<div style="left:492.500px;top:205px;width:288.500px;height:304px;border:1px solid #fafafa;border-top:0;background:#f2f2f2"></div>
<div style="left:781px;top:205px;width:6.500px;height:304px;background:#fff;border:1px solid #4a7ea8"></div>
<div style="left:781px;top:204px;width:6.500px;height:174.500px;background:#0a78d2"></div>

<!-- fieldset 1 -->
<div style="left:493px;top:222.500px;width:287px;height:123.250px;border:1px solid #c9c9c9;border-right:0"></div>
<div class="t" style="left:497.500px;top:218px;padding:0 3px;background:#f2f2f2;font-size:9.1px;color:#333">Разное</div>
<div class="lab" style="left:500px;top:234px">Запускать с Windows:</div>
<div style="left:637px;top:230.500px;width:136.500px;height:20px;background:#5cb85c"></div>
<svg style="left:638px;top:235px" width="9" height="10" viewBox="0 0 9 10"><path d="M4.500 0C5.800 1 7.400 1.200 9 1.200C9 5.600 7.400 8.400 4.500 10C1.600 8.400 0 5.600 0 1.200C1.600 1.200 3.200 1 4.500 0Z" fill="#f2c21c"/><path d="M4.500 0C3.200 1 1.600 1.200 0 1.200C0 2.800.2 4 .5 5H4.500Z" fill="#2a62c8"/><path d="M4.500 5H8.500C7.800 7.300 6.400 8.900 4.500 10Z" fill="#2a62c8"/></svg>
<div class="t" style="left:647.500px;top:237px;font-size:6.9px;font-weight:bold;color:#fff">Удалить высокий приоритет</div>
<div class="lab" style="left:500px;top:257px">Регулировка цвета окон:</div>
<div style="left:639px;top:257.500px;width:11.500px;height:11.500px;background:#0a78d2;border-radius:2px"></div>
<svg style="left:640.500px;top:259.500px" width="9" height="8" viewBox="0 0 9 8"><path d="M1 4L3.400 6.400L8 1.400" fill="none" stroke="#fff" stroke-width="1.600"/></svg>
<div class="lab" style="left:500px;top:279px">Язык интерфейса:</div>
<div class="t" style="left:500px;top:292px;font-size:7px;font-weight:bold;color:#961f52">Help translate Wallpaper Engine!</div>
<div class="dd" style="left:637px;top:277.500px;width:136.500px;height:17px;padding-left:14px">Russian (Русский язык)</div>
<div class="lab" style="left:500px;top:302.500px">Внешний вид:</div>
<div class="dd" style="left:637px;top:300.250px;width:136.500px;height:16.750px;padding-left:14px">Белый</div>
<div class="lab" style="left:500px;top:319.500px;line-height:11px">Прозрачность иконок рабочего<br>стола:</div>
<div style="left:637px;top:331px;width:106px;height:2px;background:#c9c9c9"></div>
<div style="left:739.500px;top:324.500px;width:5px;height:16px;background:#0a78d2;border-radius:1px"></div>
<div class="t" style="left:752px;top:327px;font-size:8.4px;color:#333">100%</div>

<!-- fieldset 2 -->
<div style="left:493px;top:360.500px;width:287px;height:148px;border:1px solid #c9c9c9;border-right:0;border-bottom:0"></div>
<div class="t" style="left:497px;top:356px;padding:0 3px;background:#f2f2f2;font-size:9.1px;color:#333">Media</div>
<div class="lab" style="left:500px;top:373px">Устройство ввода звука:</div>
<div class="dd" style="left:637px;top:370px;width:136.500px;height:17.500px;padding-left:14px">По умолчанию</div>
<svg style="left:501px;top:396px" width="6" height="9" viewBox="0 0 6 9"><rect x="1.700" y="0" width="2.600" height="5.400" rx="1.300" fill="#777"/><path d="M.4 3.600V4.400A2.600 2.600 0 0 0 5.600 4.400V3.600M3 7V8.600M1.400 8.600H4.600" fill="none" stroke="#777" stroke-width=".8"/></svg>
<div class="lab" style="left:513.500px;top:395.500px">Громкость записи:</div>
<div style="left:637px;top:401.500px;width:107px;height:2px;background:#c9c9c9"></div>
<div style="left:662.500px;top:394.500px;width:5.500px;height:16.500px;background:#0a78d2;border-radius:1px"></div>
<div style="left:748px;top:395px;width:25.500px;height:15px;background:#fff;border:1px solid #b9b9b9"></div>
<div class="t" style="left:750.500px;top:398.500px;font-size:8.4px;color:#333">50</div>
<svg style="left:500px;top:419px" width="9" height="8" viewBox="0 0 9 8"><path d="M0 2.600H1.800L4.200 .4V7.600L1.800 5.400H0Z" fill="#555"/><path d="M5.400 2.400A2.200 2.200 0 0 1 5.400 5.600M6.600 1.200A3.800 3.800 0 0 1 6.600 6.800" fill="none" stroke="#555" stroke-width=".9"/></svg>
<div class="lab" style="left:513.500px;top:418px">Звук обоев:</div>
<div style="left:639px;top:418.500px;width:11.500px;height:11.500px;background:#fafcff;border:1px solid #3f7fc0;border-radius:2.500px"></div>
<div class="lab" style="left:500px;top:440.500px">Video framework:</div>
<div class="dd" style="left:637px;top:438px;width:136.500px;height:17.500px;padding-left:14px">Prefer Media Foundation</div>
<div class="lab" style="left:500px;top:463px">Загружать видео:</div>
<div class="dd" style="left:637px;top:460.500px;width:136.500px;height:17.500px;padding-left:14px">С диска</div>
<div class="lab" style="left:500px;top:485.500px">Зацикливание видео:</div>
<div class="dd" style="left:637px;top:483.500px;width:136.500px;height:17.500px;padding-left:14px">По умолчанию</div>

<div class="btn blue" style="left:658px;top:521px;width:63px;height:17.500px;font-size:9.3px;line-height:17.500px">OK</div>
<div class="btn grey" style="left:724px;top:521px;width:63px;height:17.500px;font-size:9.3px;line-height:17.500px">Отмена</div>
</div>
</div>

<div class="abs" style="left:502px;top:82px;width:183.500px;height:41px;background:#fff;border:1px solid #efc78f;border-radius:3px;box-shadow:0 2px 5px rgba(0,0,0,.3)"></div>
<svg class="abs" style="left:496px;top:97px" width="8" height="12" viewBox="0 0 8 12"><path d="M7.500 0L.8 6L7.500 12" fill="#fff" stroke="#efc78f" stroke-width="1"/><rect x="7" y="0" width="1" height="12" fill="#fff"/></svg>
<div class="abs t" style="left:512.500px;top:90.200px;font-size:9.3px;line-height:13.200px;color:#333">Нажмите здесь, чтобы скачать<br>новые обои!</div>

<div id="tb"><div style="left:0;top:-702px;width:1280px;height:720px">
<div style="left:6px;top:697px;width:25px;height:25px;border-radius:50%;background:radial-gradient(circle at 50% 30%,#8ad4f8,#2f86cc 55%,#0c3c78);box-shadow:0 0 3px #5ab0e8"></div>
<svg style="left:11px;top:702px" width="15" height="14" viewBox="0 0 15 14"><path d="M1 2Q4 .5 7 2V6.500Q4 5 1 6.500Z" fill="#f0642c"/><path d="M8 2.200Q11 3.500 14 2V6.500Q11 8 8 6.700Z" fill="#8cc83c"/><path d="M1 7.500Q4 6 7 7.500V12Q4 10.500 1 12Z" fill="#2c9ce4"/><path d="M8 7.700Q11 9 14 7.500V12Q11 13.500 8 12.200Z" fill="#fcc82c"/></svg>
<svg style="left:47px;top:704px" width="13" height="13" viewBox="0 0 13 13"><rect x="0" y="3" width="5" height="9" fill="#c8ccd0"/><rect x="3" y="1" width="10" height="8" fill="#e0e4e8"/><rect x="4" y="2" width="8" height="6" fill="#2a8a3a"/><rect x="6" y="9" width="4" height="2" fill="#aaa"/><rect x="4.500" y="11" width="7" height="1.200" fill="#ccc"/></svg>
<div style="left:79px;top:705px;width:11px;height:11px;border-radius:50%;background:conic-gradient(from -60deg,#e8412c 0 120deg,#f8c21c 120deg 240deg,#3aa84a 240deg 360deg)"></div><div style="left:82.250px;top:708.250px;width:4.500px;height:4.500px;border-radius:50%;background:#4a8af0;border:1px solid #fff"></div>
<div style="left:110px;top:704.500px;width:11px;height:12px;border-radius:50%;background:#e0202c"></div><div style="left:113.700px;top:706.500px;width:3.600px;height:8px;border-radius:50%;background:#12181d"></div>
<div style="left:140.500px;top:705px;width:11px;height:11px;border-radius:50%;background:#f4f4f4"></div><svg style="left:142.500px;top:706.500px" width="7" height="7" viewBox="0 0 8 8"><path d="M4 0L8 8H6L4 4L2 8H0Z" fill="#111"/></svg>
<div style="left:171px;top:705px;width:11px;height:11px;border-radius:50%;background:#2a7ae0"></div><div style="left:173.500px;top:708px;width:7px;height:5px;border-radius:2.500px;background:#f8d030"></div><div style="left:175.200px;top:709.200px;width:2.600px;height:2.600px;border-radius:50%;background:#2a7ae0"></div>
<div style="left:201.500px;top:704.500px;width:12px;height:12px;border-radius:2.500px;background:#1c7cf0"></div><svg style="left:203px;top:707px" width="9" height="7" viewBox="0 0 9 7"><path d="M.5 6.500V1H8.500V6.500H6.500V3H5.500V6.500H3.500V3H2.500V6.500Z" fill="#fff"/></svg>
<div style="left:223.5px;top:702px;width:28.5px;height:18px;background:linear-gradient(#5c646a,#3c444a 45%,#1c242a 50%,#141a20);border:1px solid #9aa2a8;border-bottom:0;border-radius:2px 2px 0 0"></div>
<div style="left:254.5px;top:702px;width:23px;height:18px;background:linear-gradient(#5c646a,#3c444a 45%,#1c242a 50%,#141a20);border:1px solid #9aa2a8;border-bottom:0;border-radius:2px 2px 0 0"></div>
<div style="left:285px;top:702px;width:28.5px;height:18px;background:linear-gradient(#5c646a,#3c444a 45%,#1c242a 50%,#141a20);border:1px solid #9aa2a8;border-bottom:0;border-radius:2px 2px 0 0"></div>
<div style="left:316px;top:702px;width:28.5px;height:18px;background:linear-gradient(#d0d6dc,#a8b0b8 45%,#80888e 50%,#70787e);border:1px solid #e0e4e8;border-bottom:0;border-radius:2px 2px 0 0"></div>
<div style="left:280px;top:703px;width:1px;height:17px;background:#555"></div>
<div style="left:231.500px;top:704.500px;width:12px;height:12px;border-radius:50%;background:#6cb82c"></div><div class="t" style="left:234.500px;top:705.500px;font-size:9px;font-weight:bold;color:#fff">µ</div>
<div style="left:259px;top:706px;width:13px;height:10px;background:#f4d878;border-radius:1px"></div><div style="left:261px;top:710px;width:9px;height:5px;background:#6ab8e8"></div>
<div style="left:293px;top:705px;width:12px;height:11px;background:#f6f6f0"></div><div style="left:295px;top:709px;width:8px;height:2px;background:#c84030"></div><div style="left:297px;top:707px;width:3px;height:6px;background:#4a9a3a"></div>
<div style="left:323.500px;top:705px;width:13px;height:11px;background:#1c6cd0;border:1px solid #fff"></div><div style="left:327px;top:708px;width:6px;height:5px;background:#fff"></div>
<svg style="left:962.7px;top:705px" width="12" height="12" viewBox="0 0 12 12"><rect x="1" y="1" width="10" height="10" fill="#f2f2f2"/><g fill="#222"><rect x="2" y="2" width="2" height="2"/><rect x="5" y="5" width="2" height="2"/><rect x="8" y="8" width="2" height="2"/><rect x="8" y="2" width="2" height="2"/><rect x="2" y="8" width="2" height="2"/><rect x="5" y="2" width="1" height="1"/><rect x="2" y="5" width="1" height="1"/></g></svg>
<svg style="left:978.6px;top:705px" width="12" height="12" viewBox="0 0 12 12"><rect x="1" y="1" width="10" height="10" fill="#f4f4f4"/><path d="M1 1H5V5L9 1H11L6 6L11 11H8L5 7.500V11H1Z" fill="#d8202c"/><path d="M7 11L11 6V11Z" fill="#d8202c"/></svg>
<svg style="left:995.0px;top:705px" width="12" height="12" viewBox="0 0 12 12"><ellipse cx="6" cy="6" rx="4" ry="5.500" fill="#1c84dc"/><path d="M4.200 4L7.800 7.600L6 9.200V2.800L7.800 4.400L4.200 8" fill="none" stroke="#fff" stroke-width=".9"/></svg>
<svg style="left:1011.0px;top:705px" width="12" height="12" viewBox="0 0 12 12"><circle cx="6" cy="6" r="5.500" fill="#6cb82c"/><path d="M3.800 3V7Q3.800 9 6 9Q8.200 9 8.200 7V3" fill="none" stroke="#fff" stroke-width="1.500"/></svg>
<svg style="left:1027.0px;top:705px" width="12" height="12" viewBox="0 0 12 12"><circle cx="6" cy="6" r="5" fill="#3aa83a"/><path d="M1 6A5 5 0 0 1 11 6Q8 4 6 6Q4 8 1 6Z" fill="#2a7ae0"/><path d="M2 8L7 5L6 8L11 7" fill="none" stroke="#f8d030" stroke-width="1.200"/></svg>
<svg style="left:1042.9px;top:705px" width="12" height="12" viewBox="0 0 12 12"><rect x=".5" y=".5" width="11" height="11" rx="2" fill="#1c7cf0"/><path d="M2.500 9V3.500H9.500V9H7.800V5.300H6.800V9H5.200V5.300H4.200V9Z" fill="#fff"/></svg>
<svg style="left:1058.8px;top:705px" width="12" height="12" viewBox="0 0 12 12"><path d="M1 1.500Q4 2 6 .5Q8 2 11 1.500Q11 8 6 11.500Q1 8 1 1.500Z" fill="#f0f2f6"/><circle cx="8.500" cy="8.500" r="3" fill="#2a8ae0"/><rect x="8.100" y="7.800" width=".9" height="2.400" fill="#fff"/><rect x="8.100" y="6.500" width=".9" height=".9" fill="#fff"/></svg>
<svg style="left:1074.8px;top:705px" width="12" height="12" viewBox="0 0 12 12"><rect x="1" y="1" width="10" height="10" rx="1" fill="#e03038"/><rect x="1" y="1" width="5" height="5" fill="#2a5ae0"/><path d="M4 8L6 10L10 4" fill="none" stroke="#fff" stroke-width="1.200"/></svg>
<svg style="left:1090.7px;top:705px" width="12" height="12" viewBox="0 0 12 12"><rect x="2" y="1" width="4" height="9" rx="1" fill="#a8aca8"/><rect x="3" y="0" width="2" height="2" fill="#ddd"/><circle cx="8" cy="8.500" r="3.300" fill="#2ab02a"/><path d="M6.300 8.500L7.600 9.800L9.800 7.300" fill="none" stroke="#fff" stroke-width=".9"/></svg>
<svg style="left:1106.6px;top:705px" width="12" height="12" viewBox="0 0 12 12"><path d="M2 1V11" stroke="#e8e8e8" stroke-width="1.200"/><path d="M2.600 1.500Q5 .5 7 2Q8.500 3 10 2.200V7Q8.500 8 7 7Q5 5.500 2.600 6.500Z" fill="#f4f4f4"/><circle cx="8.500" cy="8.800" r="3" fill="#e02020"/><path d="M7.300 7.600L9.700 10M9.700 7.600L7.300 10" stroke="#fff" stroke-width=".9"/></svg>
<svg style="left:1123.0px;top:705px" width="12" height="12" viewBox="0 0 12 12"><rect x="3" y="3" width="8" height="6.500" fill="none" stroke="#f0f0f0" stroke-width="1.200"/><rect x="5" y="9.500" width="4" height="1.500" fill="#f0f0f0"/><rect x="1" y="1" width="4.500" height="4.500" fill="#e02020"/><path d="M2 2L4.500 4.500M4.500 2L2 4.500" stroke="#fff" stroke-width=".8"/></svg>
<svg style="left:1138.5px;top:705px" width="12" height="12" viewBox="0 0 12 12"><path d="M1 4.200H3.200L6 1.500V10.500L3.200 7.800H1Z" fill="#f4f4f4"/><path d="M7.500 3.800A3 3 0 0 1 7.500 8.200M9 2.200A5 5 0 0 1 9 9.800" fill="none" stroke="#f4f4f4" stroke-width=".9"/></svg>
<div class="t" style="left:1155px;top:703.500px;width:50px;text-align:center;font-size:8px;font-style:italic;color:#f0f0f0;letter-spacing:.8px">СР, 29</div>
<div class="t" style="left:1155px;top:711px;width:50px;text-align:center;font-size:8px;font-style:italic;color:#f0f0f0;letter-spacing:.4px">НОЯ</div>
<div style="left:1201.500px;top:701.500px;width:65.500px;height:19px;background:linear-gradient(#e4e0b4,#cfc992);border:1px solid #8a866a;border-radius:2px"></div>
<div class="t" style="left:1201.500px;top:703px;width:65.500px;text-align:center;font-family:'Liberation Mono',monospace;font-weight:bold;font-style:italic;font-size:17px;letter-spacing:-.5px;color:#1a1a14;transform:scaleX(1.05)">22:56</div>
<div style="left:1270px;top:702px;width:10px;height:18px;background:linear-gradient(90deg,#3a4248,#1a2026);border-left:1px solid #555"></div>
</div></div>
</body>
</html>
